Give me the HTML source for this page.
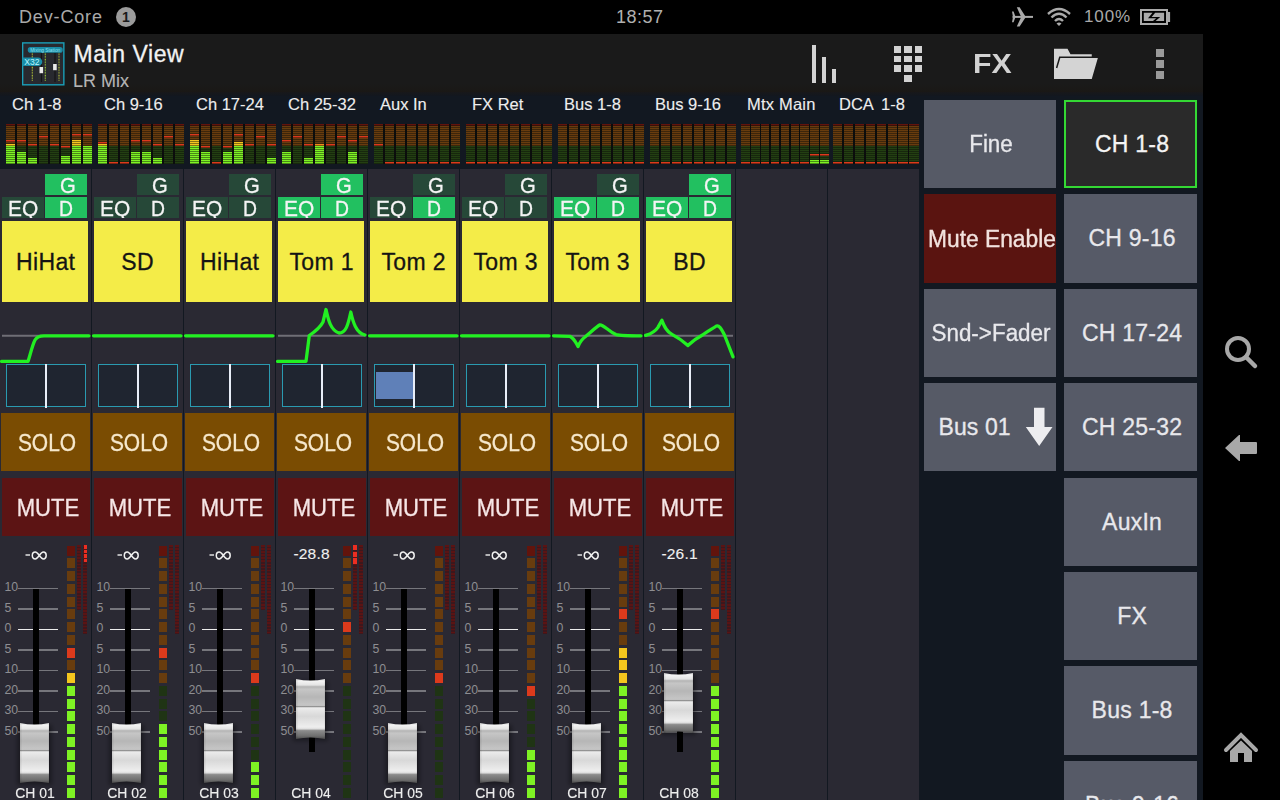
<!DOCTYPE html><html><head><meta charset="utf-8"><style>
html,body{margin:0;padding:0;width:1280px;height:800px;overflow:hidden;background:#000;font-family:"Liberation Sans", sans-serif;}
</style></head><body><div style="position:relative;width:1280px;height:800px;overflow:hidden;">
<div style="position:absolute;left:0px;top:0px;width:1280px;height:800px;background:#000;"></div><div style="position:absolute;left:0px;top:93px;width:1203px;height:707px;background:#121821;"></div><div style="position:absolute;left:0px;top:34px;width:1203px;height:58px;background:linear-gradient(#1a1a1a 0,#1a1a1a 50px,#1a1816 58px);"></div><div style="position:absolute;left:0px;top:92px;width:1203px;height:4px;background:linear-gradient(#18181a,#12171f);"></div><div style="position:absolute;left:19px;top:8px;font-size:18px;line-height:1;color:#a9a9a9;white-space:nowrap;letter-spacing:0.85px;-webkit-text-stroke:0.12px #a9a9a9;-webkit-text-stroke:0;">Dev-Core</div><div style="position:absolute;left:116px;top:7px;width:20px;height:20px;border-radius:50%;background:#9b9b9b;color:#1a1a1a;font-size:14px;font-weight:bold;line-height:20px;text-align:center;">1</div><div style="position:absolute;left:616px;top:8px;font-size:18px;line-height:1;color:#b0b0b0;white-space:nowrap;letter-spacing:0.5px;-webkit-text-stroke:0.12px #b0b0b0;-webkit-text-stroke:0;">18:57</div><div style="position:absolute;left:1084px;top:8px;font-size:17px;line-height:1;color:#a9a9a9;white-space:nowrap;letter-spacing:0.9px;-webkit-text-stroke:0.12px #a9a9a9;-webkit-text-stroke:0;">100%</div><svg style="position:absolute;left:1010px;top:6px" width="26" height="22" viewBox="0 0 26 22">
<path d="M2.5 9.9 L23 9.9 L23 11.9 L2.5 11.9Z" fill="#aaa"/>
<path d="M6.8 1.2 L9.6 1.2 L15.8 10.9 L9.6 20.6 L6.8 20.6 L11.2 10.9Z" fill="#aaa"/>
<path d="M2 5.5 L3.6 5.5 L5.2 10 L5.2 11.8 L3.6 16.3 L2 16.3 L3 10.9Z" fill="#aaa"/>
</svg><svg style="position:absolute;left:1046px;top:7px" width="26" height="20" viewBox="0 0 26 20">
<path d="M2 7 Q13 -3 24 7" stroke="#aaa" stroke-width="2.4" fill="none"/>
<path d="M5.5 10.5 Q13 3 20.5 10.5" stroke="#aaa" stroke-width="2.4" fill="none"/>
<path d="M9 14 Q13 10 17 14" stroke="#aaa" stroke-width="2.4" fill="none"/>
<path d="M10.5 16.5 L13 19 L15.5 16.5 Q13 14.5 10.5 16.5Z" fill="#aaa"/></svg><svg style="position:absolute;left:1140px;top:9px" width="31" height="17" viewBox="0 0 31 17">
<rect x="1" y="1" width="26" height="14" fill="none" stroke="#aaa" stroke-width="2"/>
<rect x="28" y="3" width="2.1" height="10" fill="#aaa"/>
<path d="M3.8 3.8 L24.1 3.8 L24.1 12 L3.8 12Z M12.5 3.8 L15.2 3.8 L11.6 7.9 L20.2 7.9 L15.6 12 L13 12 L16.2 9.2 L8 9.2 Z" fill="#aaa" fill-rule="evenodd"/>
</svg><svg style="position:absolute;left:22px;top:42px" width="43" height="44" viewBox="0 0 43 44">
<rect x="0.65" y="0.9" width="41.2" height="41.9" fill="#28292f" stroke="#1b9fb8" stroke-width="1.4"/>
<line x1="19.4" y1="11" x2="19.4" y2="40" stroke="#111" stroke-width="1"/>
<line x1="33" y1="11" x2="33" y2="40" stroke="#111" stroke-width="1"/>
<line x1="10.3" y1="10.6" x2="10.3" y2="39.6" stroke="#b8c83a" stroke-width="1.1" stroke-dasharray="0.9 0.7"/>
<line x1="23.3" y1="10.6" x2="23.3" y2="39.6" stroke="#9fd034" stroke-width="1.1" stroke-dasharray="0.9 0.7"/>
<line x1="37" y1="10.6" x2="37" y2="39.6" stroke="#b4c038" stroke-width="1.1" stroke-dasharray="0.9 0.7"/>
<rect x="5.75" y="5.1" width="35" height="5.6" rx="2.8" fill="#1a8ca6"/>
<text x="23.2" y="9.5" font-size="4.8" fill="#8fe0f0" font-family="Liberation Sans" text-anchor="middle">Mixing Station</text>
<path d="M0.5 15.5 L16 15.5 A4.25 4.25 0 0 1 16 24 L0.5 24Z" fill="#1a8ca6"/>
<text x="10" y="22.8" font-size="8.6" fill="#b8f4ff" font-family="Liberation Sans" text-anchor="middle">X32</text>
<rect x="17.5" y="25" width="3.6" height="6.2" fill="#e8e8e8"/>
<rect x="31.1" y="22" width="3.6" height="6.2" fill="#e8e8e8"/>
</svg><div style="position:absolute;left:73.6px;top:43px;font-size:23px;line-height:1;color:#f2f2f2;white-space:nowrap;letter-spacing:0.55px;-webkit-text-stroke:0.3px #f2f2f2;">Main View</div><div style="position:absolute;left:73px;top:72px;font-size:18px;line-height:1;color:#b5b5b5;white-space:nowrap;letter-spacing:0px;-webkit-text-stroke:0.12px #b5b5b5;">LR Mix</div><div style="position:absolute;left:812px;top:45px;width:4px;height:38px;background:#d2d2d2;"></div><div style="position:absolute;left:822px;top:57px;width:4px;height:26px;background:#d2d2d2;"></div><div style="position:absolute;left:832px;top:69px;width:4px;height:14px;background:#d2d2d2;"></div><div style="position:absolute;left:894.0px;top:45.8px;width:7.3px;height:6.8px;background:#d2d2d2;"></div><div style="position:absolute;left:904.3px;top:45.8px;width:7.3px;height:6.8px;background:#d2d2d2;"></div><div style="position:absolute;left:914.6px;top:45.8px;width:7.3px;height:6.8px;background:#d2d2d2;"></div><div style="position:absolute;left:894.0px;top:55.599999999999994px;width:7.3px;height:6.8px;background:#d2d2d2;"></div><div style="position:absolute;left:904.3px;top:55.599999999999994px;width:7.3px;height:6.8px;background:#d2d2d2;"></div><div style="position:absolute;left:914.6px;top:55.599999999999994px;width:7.3px;height:6.8px;background:#d2d2d2;"></div><div style="position:absolute;left:894.0px;top:65.4px;width:7.3px;height:6.8px;background:#d2d2d2;"></div><div style="position:absolute;left:904.3px;top:65.4px;width:7.3px;height:6.8px;background:#d2d2d2;"></div><div style="position:absolute;left:914.6px;top:65.4px;width:7.3px;height:6.8px;background:#d2d2d2;"></div><div style="position:absolute;left:904.3px;top:75.2px;width:7.3px;height:6.8px;background:#d2d2d2;"></div><div style="position:absolute;left:973px;top:50px;font-size:28px;line-height:1;color:#d2d2d2;white-space:nowrap;letter-spacing:0px;-webkit-text-stroke:0.3px #d2d2d2;transform:scaleX(1.08);transform-origin:0 0;font-weight:bold;-webkit-text-stroke:0;">FX</div><svg style="position:absolute;left:1053px;top:48px" width="48" height="34" viewBox="0 0 48 34">
<path d="M1 0.75 L14.5 0.75 L17.5 6.25 L38.75 6.25 L38.75 9.5 L45 9.5 L38.75 31 L1 31 Z" fill="#d4d4d4"/>
<path d="M3.6 20 L6.75 9.2 L46 9.2" fill="none" stroke="#1a1a1a" stroke-width="1.5"/></svg><div style="position:absolute;left:1156px;top:49px;width:8px;height:8px;background:#9a9a9a;"></div><div style="position:absolute;left:1156px;top:60px;width:8px;height:8px;background:#9a9a9a;"></div><div style="position:absolute;left:1156px;top:71px;width:8px;height:8px;background:#9a9a9a;"></div><svg style="position:absolute;left:1222px;top:333px" width="38" height="38" viewBox="0 0 38 38">
<circle cx="16" cy="16" r="11" fill="none" stroke="#a8a8a8" stroke-width="4"/>
<line x1="24" y1="24" x2="33" y2="33" stroke="#a8a8a8" stroke-width="4.5" stroke-linecap="round"/></svg><svg style="position:absolute;left:1222px;top:432px" width="38" height="32" viewBox="0 0 38 32">
<path d="M3 16 L17 3 L18 3 L18 10 L34 10 Q35 10 35 11 L35 21 Q35 22 34 22 L18 22 L18 29 L17 29 Z" fill="#a8a8a8"/></svg><svg style="position:absolute;left:1222px;top:730px" width="38" height="36" viewBox="0 0 38 36">
<path d="M4 20 L19 5 L34 20" fill="none" stroke="#a8a8a8" stroke-width="4" stroke-linecap="round" stroke-linejoin="miter"/>
<path d="M8 21 L19 10.5 L30 21 L30 32 L22 32 L22 23 L16 23 L16 32 L8 32 Z" fill="#a8a8a8"/></svg><div style="position:absolute;left:12px;top:95.6px;font-size:16.5px;line-height:1;color:#eeeeee;white-space:nowrap;letter-spacing:0px;-webkit-text-stroke:0.12px #eeeeee;">Ch 1-8</div><div style="position:absolute;left:104px;top:95.6px;font-size:16.5px;line-height:1;color:#eeeeee;white-space:nowrap;letter-spacing:0px;-webkit-text-stroke:0.12px #eeeeee;">Ch 9-16</div><div style="position:absolute;left:196px;top:95.6px;font-size:16.5px;line-height:1;color:#eeeeee;white-space:nowrap;letter-spacing:0px;-webkit-text-stroke:0.12px #eeeeee;">Ch 17-24</div><div style="position:absolute;left:288px;top:95.6px;font-size:16.5px;line-height:1;color:#eeeeee;white-space:nowrap;letter-spacing:0px;-webkit-text-stroke:0.12px #eeeeee;">Ch 25-32</div><div style="position:absolute;left:380px;top:95.6px;font-size:16.5px;line-height:1;color:#eeeeee;white-space:nowrap;letter-spacing:0px;-webkit-text-stroke:0.12px #eeeeee;">Aux In</div><div style="position:absolute;left:472px;top:95.6px;font-size:16.5px;line-height:1;color:#eeeeee;white-space:nowrap;letter-spacing:0px;-webkit-text-stroke:0.12px #eeeeee;">FX Ret</div><div style="position:absolute;left:564px;top:95.6px;font-size:16.5px;line-height:1;color:#eeeeee;white-space:nowrap;letter-spacing:0px;-webkit-text-stroke:0.12px #eeeeee;">Bus 1-8</div><div style="position:absolute;left:655px;top:95.6px;font-size:16.5px;line-height:1;color:#eeeeee;white-space:nowrap;letter-spacing:0px;-webkit-text-stroke:0.12px #eeeeee;">Bus 9-16</div><div style="position:absolute;left:747px;top:95.6px;font-size:16.5px;line-height:1;color:#eeeeee;white-space:nowrap;letter-spacing:0.2px;-webkit-text-stroke:0.12px #eeeeee;">Mtx Main</div><div style="position:absolute;left:839px;top:95.6px;font-size:16.5px;line-height:1;color:#eeeeee;white-space:nowrap;letter-spacing:0px;-webkit-text-stroke:0.12px #eeeeee;">DCA <span style="margin-left:3.5px">1-8</span></div><div style="position:absolute;left:6.10px;top:124px;width:85.84px;height:40px;background:#0b0d0c"></div><div style="position:absolute;left:6.10px;top:124px;width:9.4px;height:40px;background:repeating-linear-gradient(rgba(0,0,0,0) 0px,rgba(0,0,0,0) 1.45px,rgba(8,10,6,.45) 1.45px,rgba(8,10,6,.45) 2px),linear-gradient(#62140c 0px 2px,#683c0e 2px 4px,#683c0e 4px 6px,#683c0e 6px 8px,#683c0e 8px 10px,#683c0e 10px 12px,#683c0e 12px 14px,#683c0e 14px 16px,#dc3a1c 16px 18px,#683c0e 18px 20px,#f4c61e 20px 22px,#7ef224 22px 24px,#7ef224 24px 26px,#7ef224 26px 28px,#7ef224 28px 30px,#7ef224 30px 32px,#7ef224 32px 34px,#7ef224 34px 36px,#7ef224 36px 38px,#7ef224 38px 40px);"></div><div style="position:absolute;left:17.02px;top:124px;width:9.4px;height:40px;background:repeating-linear-gradient(rgba(0,0,0,0) 0px,rgba(0,0,0,0) 1.45px,rgba(8,10,6,.45) 1.45px,rgba(8,10,6,.45) 2px),linear-gradient(#62140c 0px 2px,#683c0e 2px 4px,#683c0e 4px 6px,#683c0e 6px 8px,#683c0e 8px 10px,#683c0e 10px 12px,#683c0e 12px 14px,#683c0e 14px 16px,#dc3a1c 16px 18px,#683c0e 18px 20px,#683c0e 20px 22px,#233f12 22px 24px,#233f12 24px 26px,#233f12 26px 28px,#7ef224 28px 30px,#7ef224 30px 32px,#7ef224 32px 34px,#7ef224 34px 36px,#7ef224 36px 38px,#7ef224 38px 40px);"></div><div style="position:absolute;left:27.94px;top:124px;width:9.4px;height:40px;background:repeating-linear-gradient(rgba(0,0,0,0) 0px,rgba(0,0,0,0) 1.45px,rgba(8,10,6,.45) 1.45px,rgba(8,10,6,.45) 2px),linear-gradient(#62140c 0px 2px,#683c0e 2px 4px,#683c0e 4px 6px,#683c0e 6px 8px,#683c0e 8px 10px,#683c0e 10px 12px,#683c0e 12px 14px,#683c0e 14px 16px,#683c0e 16px 18px,#683c0e 18px 20px,#dc3a1c 20px 22px,#233f12 22px 24px,#233f12 24px 26px,#233f12 26px 28px,#233f12 28px 30px,#233f12 30px 32px,#233f12 32px 34px,#7ef224 34px 36px,#7ef224 36px 38px,#7ef224 38px 40px);"></div><div style="position:absolute;left:38.86px;top:124px;width:9.4px;height:40px;background:repeating-linear-gradient(rgba(0,0,0,0) 0px,rgba(0,0,0,0) 1.45px,rgba(8,10,6,.45) 1.45px,rgba(8,10,6,.45) 2px),linear-gradient(#62140c 0px 2px,#683c0e 2px 4px,#683c0e 4px 6px,#683c0e 6px 8px,#683c0e 8px 10px,#683c0e 10px 12px,#dc3a1c 12px 14px,#683c0e 14px 16px,#683c0e 16px 18px,#683c0e 18px 20px,#683c0e 20px 22px,#233f12 22px 24px,#233f12 24px 26px,#233f12 26px 28px,#233f12 28px 30px,#233f12 30px 32px,#233f12 32px 34px,#233f12 34px 36px,#233f12 36px 38px,#233f12 38px 40px);"></div><div style="position:absolute;left:49.78px;top:124px;width:9.4px;height:40px;background:repeating-linear-gradient(rgba(0,0,0,0) 0px,rgba(0,0,0,0) 1.45px,rgba(8,10,6,.45) 1.45px,rgba(8,10,6,.45) 2px),linear-gradient(#62140c 0px 2px,#683c0e 2px 4px,#683c0e 4px 6px,#683c0e 6px 8px,#683c0e 8px 10px,#683c0e 10px 12px,#683c0e 12px 14px,#683c0e 14px 16px,#683c0e 16px 18px,#683c0e 18px 20px,#dc3a1c 20px 22px,#233f12 22px 24px,#233f12 24px 26px,#233f12 26px 28px,#233f12 28px 30px,#233f12 30px 32px,#233f12 32px 34px,#233f12 34px 36px,#233f12 36px 38px,#233f12 38px 40px);"></div><div style="position:absolute;left:60.70px;top:124px;width:9.4px;height:40px;background:repeating-linear-gradient(rgba(0,0,0,0) 0px,rgba(0,0,0,0) 1.45px,rgba(8,10,6,.45) 1.45px,rgba(8,10,6,.45) 2px),linear-gradient(#62140c 0px 2px,#683c0e 2px 4px,#683c0e 4px 6px,#683c0e 6px 8px,#683c0e 8px 10px,#683c0e 10px 12px,#683c0e 12px 14px,#683c0e 14px 16px,#683c0e 16px 18px,#683c0e 18px 20px,#683c0e 20px 22px,#dc3a1c 22px 24px,#233f12 24px 26px,#233f12 26px 28px,#233f12 28px 30px,#233f12 30px 32px,#7ef224 32px 34px,#7ef224 34px 36px,#7ef224 36px 38px,#7ef224 38px 40px);"></div><div style="position:absolute;left:71.62px;top:124px;width:9.4px;height:40px;background:repeating-linear-gradient(rgba(0,0,0,0) 0px,rgba(0,0,0,0) 1.45px,rgba(8,10,6,.45) 1.45px,rgba(8,10,6,.45) 2px),linear-gradient(#62140c 0px 2px,#683c0e 2px 4px,#683c0e 4px 6px,#683c0e 6px 8px,#683c0e 8px 10px,#dc3a1c 10px 12px,#683c0e 12px 14px,#683c0e 14px 16px,#f4c61e 16px 18px,#f4c61e 18px 20px,#f4c61e 20px 22px,#7ef224 22px 24px,#7ef224 24px 26px,#7ef224 26px 28px,#7ef224 28px 30px,#7ef224 30px 32px,#7ef224 32px 34px,#7ef224 34px 36px,#7ef224 36px 38px,#7ef224 38px 40px);"></div><div style="position:absolute;left:82.54px;top:124px;width:9.4px;height:40px;background:repeating-linear-gradient(rgba(0,0,0,0) 0px,rgba(0,0,0,0) 1.45px,rgba(8,10,6,.45) 1.45px,rgba(8,10,6,.45) 2px),linear-gradient(#62140c 0px 2px,#683c0e 2px 4px,#683c0e 4px 6px,#683c0e 6px 8px,#683c0e 8px 10px,#dc3a1c 10px 12px,#683c0e 12px 14px,#683c0e 14px 16px,#683c0e 16px 18px,#683c0e 18px 20px,#683c0e 20px 22px,#7ef224 22px 24px,#7ef224 24px 26px,#7ef224 26px 28px,#7ef224 28px 30px,#7ef224 30px 32px,#7ef224 32px 34px,#7ef224 34px 36px,#7ef224 36px 38px,#7ef224 38px 40px);"></div><div style="position:absolute;left:98.10px;top:124px;width:85.84px;height:40px;background:#0b0d0c"></div><div style="position:absolute;left:98.10px;top:124px;width:9.4px;height:40px;background:repeating-linear-gradient(rgba(0,0,0,0) 0px,rgba(0,0,0,0) 1.45px,rgba(8,10,6,.45) 1.45px,rgba(8,10,6,.45) 2px),linear-gradient(#62140c 0px 2px,#683c0e 2px 4px,#683c0e 4px 6px,#683c0e 6px 8px,#683c0e 8px 10px,#683c0e 10px 12px,#683c0e 12px 14px,#683c0e 14px 16px,#683c0e 16px 18px,#dc3a1c 18px 20px,#f4c61e 20px 22px,#7ef224 22px 24px,#7ef224 24px 26px,#7ef224 26px 28px,#7ef224 28px 30px,#7ef224 30px 32px,#7ef224 32px 34px,#7ef224 34px 36px,#7ef224 36px 38px,#7ef224 38px 40px);"></div><div style="position:absolute;left:109.02px;top:124px;width:9.4px;height:40px;background:repeating-linear-gradient(rgba(0,0,0,0) 0px,rgba(0,0,0,0) 1.45px,rgba(8,10,6,.45) 1.45px,rgba(8,10,6,.45) 2px),linear-gradient(#62140c 0px 2px,#683c0e 2px 4px,#683c0e 4px 6px,#683c0e 6px 8px,#683c0e 8px 10px,#683c0e 10px 12px,#683c0e 12px 14px,#683c0e 14px 16px,#683c0e 16px 18px,#683c0e 18px 20px,#683c0e 20px 22px,#233f12 22px 24px,#233f12 24px 26px,#233f12 26px 28px,#233f12 28px 30px,#233f12 30px 32px,#233f12 32px 34px,#233f12 34px 36px,#233f12 36px 38px,#dc3a1c 38px 40px);"></div><div style="position:absolute;left:119.94px;top:124px;width:9.4px;height:40px;background:repeating-linear-gradient(rgba(0,0,0,0) 0px,rgba(0,0,0,0) 1.45px,rgba(8,10,6,.45) 1.45px,rgba(8,10,6,.45) 2px),linear-gradient(#62140c 0px 2px,#683c0e 2px 4px,#683c0e 4px 6px,#683c0e 6px 8px,#683c0e 8px 10px,#683c0e 10px 12px,#683c0e 12px 14px,#683c0e 14px 16px,#683c0e 16px 18px,#683c0e 18px 20px,#683c0e 20px 22px,#233f12 22px 24px,#233f12 24px 26px,#233f12 26px 28px,#233f12 28px 30px,#233f12 30px 32px,#233f12 32px 34px,#233f12 34px 36px,#233f12 36px 38px,#dc3a1c 38px 40px);"></div><div style="position:absolute;left:130.86px;top:124px;width:9.4px;height:40px;background:repeating-linear-gradient(rgba(0,0,0,0) 0px,rgba(0,0,0,0) 1.45px,rgba(8,10,6,.45) 1.45px,rgba(8,10,6,.45) 2px),linear-gradient(#62140c 0px 2px,#683c0e 2px 4px,#683c0e 4px 6px,#683c0e 6px 8px,#683c0e 8px 10px,#683c0e 10px 12px,#683c0e 12px 14px,#683c0e 14px 16px,#dc3a1c 16px 18px,#683c0e 18px 20px,#683c0e 20px 22px,#233f12 22px 24px,#233f12 24px 26px,#233f12 26px 28px,#7ef224 28px 30px,#7ef224 30px 32px,#7ef224 32px 34px,#7ef224 34px 36px,#7ef224 36px 38px,#7ef224 38px 40px);"></div><div style="position:absolute;left:141.78px;top:124px;width:9.4px;height:40px;background:repeating-linear-gradient(rgba(0,0,0,0) 0px,rgba(0,0,0,0) 1.45px,rgba(8,10,6,.45) 1.45px,rgba(8,10,6,.45) 2px),linear-gradient(#62140c 0px 2px,#683c0e 2px 4px,#683c0e 4px 6px,#683c0e 6px 8px,#683c0e 8px 10px,#683c0e 10px 12px,#683c0e 12px 14px,#683c0e 14px 16px,#dc3a1c 16px 18px,#683c0e 18px 20px,#683c0e 20px 22px,#233f12 22px 24px,#233f12 24px 26px,#233f12 26px 28px,#7ef224 28px 30px,#7ef224 30px 32px,#7ef224 32px 34px,#7ef224 34px 36px,#7ef224 36px 38px,#7ef224 38px 40px);"></div><div style="position:absolute;left:152.70px;top:124px;width:9.4px;height:40px;background:repeating-linear-gradient(rgba(0,0,0,0) 0px,rgba(0,0,0,0) 1.45px,rgba(8,10,6,.45) 1.45px,rgba(8,10,6,.45) 2px),linear-gradient(#62140c 0px 2px,#683c0e 2px 4px,#683c0e 4px 6px,#683c0e 6px 8px,#683c0e 8px 10px,#683c0e 10px 12px,#683c0e 12px 14px,#683c0e 14px 16px,#683c0e 16px 18px,#683c0e 18px 20px,#dc3a1c 20px 22px,#233f12 22px 24px,#233f12 24px 26px,#233f12 26px 28px,#233f12 28px 30px,#233f12 30px 32px,#233f12 32px 34px,#7ef224 34px 36px,#7ef224 36px 38px,#7ef224 38px 40px);"></div><div style="position:absolute;left:163.62px;top:124px;width:9.4px;height:40px;background:repeating-linear-gradient(rgba(0,0,0,0) 0px,rgba(0,0,0,0) 1.45px,rgba(8,10,6,.45) 1.45px,rgba(8,10,6,.45) 2px),linear-gradient(#62140c 0px 2px,#683c0e 2px 4px,#683c0e 4px 6px,#683c0e 6px 8px,#683c0e 8px 10px,#683c0e 10px 12px,#dc3a1c 12px 14px,#683c0e 14px 16px,#683c0e 16px 18px,#683c0e 18px 20px,#683c0e 20px 22px,#233f12 22px 24px,#233f12 24px 26px,#233f12 26px 28px,#233f12 28px 30px,#233f12 30px 32px,#233f12 32px 34px,#233f12 34px 36px,#233f12 36px 38px,#233f12 38px 40px);"></div><div style="position:absolute;left:174.54px;top:124px;width:9.4px;height:40px;background:repeating-linear-gradient(rgba(0,0,0,0) 0px,rgba(0,0,0,0) 1.45px,rgba(8,10,6,.45) 1.45px,rgba(8,10,6,.45) 2px),linear-gradient(#62140c 0px 2px,#683c0e 2px 4px,#683c0e 4px 6px,#683c0e 6px 8px,#683c0e 8px 10px,#683c0e 10px 12px,#683c0e 12px 14px,#683c0e 14px 16px,#683c0e 16px 18px,#683c0e 18px 20px,#dc3a1c 20px 22px,#233f12 22px 24px,#233f12 24px 26px,#233f12 26px 28px,#233f12 28px 30px,#233f12 30px 32px,#233f12 32px 34px,#233f12 34px 36px,#233f12 36px 38px,#233f12 38px 40px);"></div><div style="position:absolute;left:190.10px;top:124px;width:85.84px;height:40px;background:#0b0d0c"></div><div style="position:absolute;left:190.10px;top:124px;width:9.4px;height:40px;background:repeating-linear-gradient(rgba(0,0,0,0) 0px,rgba(0,0,0,0) 1.45px,rgba(8,10,6,.45) 1.45px,rgba(8,10,6,.45) 2px),linear-gradient(#62140c 0px 2px,#683c0e 2px 4px,#683c0e 4px 6px,#683c0e 6px 8px,#683c0e 8px 10px,#dc3a1c 10px 12px,#683c0e 12px 14px,#683c0e 14px 16px,#f4c61e 16px 18px,#f4c61e 18px 20px,#f4c61e 20px 22px,#7ef224 22px 24px,#7ef224 24px 26px,#7ef224 26px 28px,#7ef224 28px 30px,#7ef224 30px 32px,#7ef224 32px 34px,#7ef224 34px 36px,#7ef224 36px 38px,#7ef224 38px 40px);"></div><div style="position:absolute;left:201.02px;top:124px;width:9.4px;height:40px;background:repeating-linear-gradient(rgba(0,0,0,0) 0px,rgba(0,0,0,0) 1.45px,rgba(8,10,6,.45) 1.45px,rgba(8,10,6,.45) 2px),linear-gradient(#62140c 0px 2px,#683c0e 2px 4px,#683c0e 4px 6px,#683c0e 6px 8px,#683c0e 8px 10px,#683c0e 10px 12px,#683c0e 12px 14px,#683c0e 14px 16px,#683c0e 16px 18px,#683c0e 18px 20px,#683c0e 20px 22px,#dc3a1c 22px 24px,#233f12 24px 26px,#233f12 26px 28px,#7ef224 28px 30px,#7ef224 30px 32px,#7ef224 32px 34px,#7ef224 34px 36px,#7ef224 36px 38px,#7ef224 38px 40px);"></div><div style="position:absolute;left:211.94px;top:124px;width:9.4px;height:40px;background:repeating-linear-gradient(rgba(0,0,0,0) 0px,rgba(0,0,0,0) 1.45px,rgba(8,10,6,.45) 1.45px,rgba(8,10,6,.45) 2px),linear-gradient(#62140c 0px 2px,#683c0e 2px 4px,#683c0e 4px 6px,#683c0e 6px 8px,#683c0e 8px 10px,#683c0e 10px 12px,#683c0e 12px 14px,#683c0e 14px 16px,#683c0e 16px 18px,#683c0e 18px 20px,#683c0e 20px 22px,#233f12 22px 24px,#233f12 24px 26px,#233f12 26px 28px,#233f12 28px 30px,#233f12 30px 32px,#233f12 32px 34px,#233f12 34px 36px,#233f12 36px 38px,#dc3a1c 38px 40px);"></div><div style="position:absolute;left:222.86px;top:124px;width:9.4px;height:40px;background:repeating-linear-gradient(rgba(0,0,0,0) 0px,rgba(0,0,0,0) 1.45px,rgba(8,10,6,.45) 1.45px,rgba(8,10,6,.45) 2px),linear-gradient(#62140c 0px 2px,#683c0e 2px 4px,#683c0e 4px 6px,#683c0e 6px 8px,#683c0e 8px 10px,#683c0e 10px 12px,#683c0e 12px 14px,#683c0e 14px 16px,#683c0e 16px 18px,#683c0e 18px 20px,#683c0e 20px 22px,#dc3a1c 22px 24px,#233f12 24px 26px,#233f12 26px 28px,#7ef224 28px 30px,#7ef224 30px 32px,#7ef224 32px 34px,#7ef224 34px 36px,#7ef224 36px 38px,#7ef224 38px 40px);"></div><div style="position:absolute;left:233.78px;top:124px;width:9.4px;height:40px;background:repeating-linear-gradient(rgba(0,0,0,0) 0px,rgba(0,0,0,0) 1.45px,rgba(8,10,6,.45) 1.45px,rgba(8,10,6,.45) 2px),linear-gradient(#62140c 0px 2px,#683c0e 2px 4px,#683c0e 4px 6px,#683c0e 6px 8px,#683c0e 8px 10px,#dc3a1c 10px 12px,#683c0e 12px 14px,#683c0e 14px 16px,#683c0e 16px 18px,#f4c61e 18px 20px,#f4c61e 20px 22px,#7ef224 22px 24px,#7ef224 24px 26px,#7ef224 26px 28px,#7ef224 28px 30px,#7ef224 30px 32px,#7ef224 32px 34px,#7ef224 34px 36px,#7ef224 36px 38px,#7ef224 38px 40px);"></div><div style="position:absolute;left:244.70px;top:124px;width:9.4px;height:40px;background:repeating-linear-gradient(rgba(0,0,0,0) 0px,rgba(0,0,0,0) 1.45px,rgba(8,10,6,.45) 1.45px,rgba(8,10,6,.45) 2px),linear-gradient(#62140c 0px 2px,#683c0e 2px 4px,#683c0e 4px 6px,#683c0e 6px 8px,#683c0e 8px 10px,#683c0e 10px 12px,#683c0e 12px 14px,#683c0e 14px 16px,#683c0e 16px 18px,#683c0e 18px 20px,#dc3a1c 20px 22px,#233f12 22px 24px,#233f12 24px 26px,#233f12 26px 28px,#233f12 28px 30px,#233f12 30px 32px,#233f12 32px 34px,#233f12 34px 36px,#233f12 36px 38px,#233f12 38px 40px);"></div><div style="position:absolute;left:255.62px;top:124px;width:9.4px;height:40px;background:repeating-linear-gradient(rgba(0,0,0,0) 0px,rgba(0,0,0,0) 1.45px,rgba(8,10,6,.45) 1.45px,rgba(8,10,6,.45) 2px),linear-gradient(#62140c 0px 2px,#683c0e 2px 4px,#683c0e 4px 6px,#683c0e 6px 8px,#683c0e 8px 10px,#683c0e 10px 12px,#dc3a1c 12px 14px,#683c0e 14px 16px,#683c0e 16px 18px,#683c0e 18px 20px,#683c0e 20px 22px,#233f12 22px 24px,#233f12 24px 26px,#233f12 26px 28px,#233f12 28px 30px,#233f12 30px 32px,#233f12 32px 34px,#233f12 34px 36px,#233f12 36px 38px,#233f12 38px 40px);"></div><div style="position:absolute;left:266.54px;top:124px;width:9.4px;height:40px;background:repeating-linear-gradient(rgba(0,0,0,0) 0px,rgba(0,0,0,0) 1.45px,rgba(8,10,6,.45) 1.45px,rgba(8,10,6,.45) 2px),linear-gradient(#62140c 0px 2px,#683c0e 2px 4px,#683c0e 4px 6px,#683c0e 6px 8px,#683c0e 8px 10px,#683c0e 10px 12px,#683c0e 12px 14px,#683c0e 14px 16px,#683c0e 16px 18px,#683c0e 18px 20px,#dc3a1c 20px 22px,#233f12 22px 24px,#233f12 24px 26px,#233f12 26px 28px,#233f12 28px 30px,#233f12 30px 32px,#233f12 32px 34px,#7ef224 34px 36px,#7ef224 36px 38px,#7ef224 38px 40px);"></div><div style="position:absolute;left:282.10px;top:124px;width:85.84px;height:40px;background:#0b0d0c"></div><div style="position:absolute;left:282.10px;top:124px;width:9.4px;height:40px;background:repeating-linear-gradient(rgba(0,0,0,0) 0px,rgba(0,0,0,0) 1.45px,rgba(8,10,6,.45) 1.45px,rgba(8,10,6,.45) 2px),linear-gradient(#62140c 0px 2px,#683c0e 2px 4px,#683c0e 4px 6px,#683c0e 6px 8px,#683c0e 8px 10px,#683c0e 10px 12px,#683c0e 12px 14px,#683c0e 14px 16px,#dc3a1c 16px 18px,#683c0e 18px 20px,#683c0e 20px 22px,#233f12 22px 24px,#233f12 24px 26px,#233f12 26px 28px,#7ef224 28px 30px,#7ef224 30px 32px,#7ef224 32px 34px,#7ef224 34px 36px,#7ef224 36px 38px,#7ef224 38px 40px);"></div><div style="position:absolute;left:293.02px;top:124px;width:9.4px;height:40px;background:repeating-linear-gradient(rgba(0,0,0,0) 0px,rgba(0,0,0,0) 1.45px,rgba(8,10,6,.45) 1.45px,rgba(8,10,6,.45) 2px),linear-gradient(#62140c 0px 2px,#683c0e 2px 4px,#683c0e 4px 6px,#683c0e 6px 8px,#683c0e 8px 10px,#683c0e 10px 12px,#dc3a1c 12px 14px,#683c0e 14px 16px,#683c0e 16px 18px,#683c0e 18px 20px,#683c0e 20px 22px,#233f12 22px 24px,#233f12 24px 26px,#233f12 26px 28px,#233f12 28px 30px,#233f12 30px 32px,#233f12 32px 34px,#233f12 34px 36px,#233f12 36px 38px,#233f12 38px 40px);"></div><div style="position:absolute;left:303.94px;top:124px;width:9.4px;height:40px;background:repeating-linear-gradient(rgba(0,0,0,0) 0px,rgba(0,0,0,0) 1.45px,rgba(8,10,6,.45) 1.45px,rgba(8,10,6,.45) 2px),linear-gradient(#62140c 0px 2px,#683c0e 2px 4px,#683c0e 4px 6px,#683c0e 6px 8px,#683c0e 8px 10px,#683c0e 10px 12px,#683c0e 12px 14px,#683c0e 14px 16px,#683c0e 16px 18px,#683c0e 18px 20px,#dc3a1c 20px 22px,#233f12 22px 24px,#233f12 24px 26px,#233f12 26px 28px,#233f12 28px 30px,#233f12 30px 32px,#233f12 32px 34px,#7ef224 34px 36px,#7ef224 36px 38px,#7ef224 38px 40px);"></div><div style="position:absolute;left:314.86px;top:124px;width:9.4px;height:40px;background:repeating-linear-gradient(rgba(0,0,0,0) 0px,rgba(0,0,0,0) 1.45px,rgba(8,10,6,.45) 1.45px,rgba(8,10,6,.45) 2px),linear-gradient(#62140c 0px 2px,#683c0e 2px 4px,#683c0e 4px 6px,#683c0e 6px 8px,#683c0e 8px 10px,#683c0e 10px 12px,#683c0e 12px 14px,#683c0e 14px 16px,#683c0e 16px 18px,#683c0e 18px 20px,#f08a1a 20px 22px,#7ef224 22px 24px,#7ef224 24px 26px,#7ef224 26px 28px,#7ef224 28px 30px,#7ef224 30px 32px,#7ef224 32px 34px,#7ef224 34px 36px,#7ef224 36px 38px,#7ef224 38px 40px);"></div><div style="position:absolute;left:325.78px;top:124px;width:9.4px;height:40px;background:repeating-linear-gradient(rgba(0,0,0,0) 0px,rgba(0,0,0,0) 1.45px,rgba(8,10,6,.45) 1.45px,rgba(8,10,6,.45) 2px),linear-gradient(#62140c 0px 2px,#683c0e 2px 4px,#683c0e 4px 6px,#683c0e 6px 8px,#683c0e 8px 10px,#683c0e 10px 12px,#683c0e 12px 14px,#683c0e 14px 16px,#683c0e 16px 18px,#683c0e 18px 20px,#dc3a1c 20px 22px,#233f12 22px 24px,#233f12 24px 26px,#233f12 26px 28px,#233f12 28px 30px,#233f12 30px 32px,#233f12 32px 34px,#233f12 34px 36px,#233f12 36px 38px,#233f12 38px 40px);"></div><div style="position:absolute;left:336.70px;top:124px;width:9.4px;height:40px;background:repeating-linear-gradient(rgba(0,0,0,0) 0px,rgba(0,0,0,0) 1.45px,rgba(8,10,6,.45) 1.45px,rgba(8,10,6,.45) 2px),linear-gradient(#62140c 0px 2px,#683c0e 2px 4px,#683c0e 4px 6px,#683c0e 6px 8px,#683c0e 8px 10px,#683c0e 10px 12px,#dc3a1c 12px 14px,#683c0e 14px 16px,#683c0e 16px 18px,#683c0e 18px 20px,#683c0e 20px 22px,#233f12 22px 24px,#233f12 24px 26px,#233f12 26px 28px,#233f12 28px 30px,#233f12 30px 32px,#233f12 32px 34px,#233f12 34px 36px,#233f12 36px 38px,#233f12 38px 40px);"></div><div style="position:absolute;left:347.62px;top:124px;width:9.4px;height:40px;background:repeating-linear-gradient(rgba(0,0,0,0) 0px,rgba(0,0,0,0) 1.45px,rgba(8,10,6,.45) 1.45px,rgba(8,10,6,.45) 2px),linear-gradient(#62140c 0px 2px,#683c0e 2px 4px,#683c0e 4px 6px,#683c0e 6px 8px,#683c0e 8px 10px,#683c0e 10px 12px,#683c0e 12px 14px,#683c0e 14px 16px,#dc3a1c 16px 18px,#683c0e 18px 20px,#683c0e 20px 22px,#233f12 22px 24px,#233f12 24px 26px,#233f12 26px 28px,#7ef224 28px 30px,#7ef224 30px 32px,#7ef224 32px 34px,#7ef224 34px 36px,#7ef224 36px 38px,#7ef224 38px 40px);"></div><div style="position:absolute;left:358.54px;top:124px;width:9.4px;height:40px;background:repeating-linear-gradient(rgba(0,0,0,0) 0px,rgba(0,0,0,0) 1.45px,rgba(8,10,6,.45) 1.45px,rgba(8,10,6,.45) 2px),linear-gradient(#62140c 0px 2px,#683c0e 2px 4px,#683c0e 4px 6px,#683c0e 6px 8px,#683c0e 8px 10px,#683c0e 10px 12px,#dc3a1c 12px 14px,#683c0e 14px 16px,#683c0e 16px 18px,#683c0e 18px 20px,#683c0e 20px 22px,#233f12 22px 24px,#233f12 24px 26px,#233f12 26px 28px,#233f12 28px 30px,#233f12 30px 32px,#233f12 32px 34px,#233f12 34px 36px,#233f12 36px 38px,#233f12 38px 40px);"></div><div style="position:absolute;left:374.10px;top:124px;width:85.84px;height:40px;background:#0b0d0c"></div><div style="position:absolute;left:374.10px;top:124px;width:9.4px;height:40px;background:repeating-linear-gradient(rgba(0,0,0,0) 0px,rgba(0,0,0,0) 1.45px,rgba(8,10,6,.45) 1.45px,rgba(8,10,6,.45) 2px),linear-gradient(#62140c 0px 2px,#683c0e 2px 4px,#683c0e 4px 6px,#683c0e 6px 8px,#683c0e 8px 10px,#683c0e 10px 12px,#683c0e 12px 14px,#683c0e 14px 16px,#683c0e 16px 18px,#683c0e 18px 20px,#dc3a1c 20px 22px,#233f12 22px 24px,#233f12 24px 26px,#233f12 26px 28px,#233f12 28px 30px,#233f12 30px 32px,#233f12 32px 34px,#233f12 34px 36px,#233f12 36px 38px,#233f12 38px 40px);"></div><div style="position:absolute;left:385.02px;top:124px;width:9.4px;height:40px;background:repeating-linear-gradient(rgba(0,0,0,0) 0px,rgba(0,0,0,0) 1.45px,rgba(8,10,6,.45) 1.45px,rgba(8,10,6,.45) 2px),linear-gradient(#62140c 0px 2px,#683c0e 2px 4px,#683c0e 4px 6px,#683c0e 6px 8px,#683c0e 8px 10px,#683c0e 10px 12px,#683c0e 12px 14px,#683c0e 14px 16px,#683c0e 16px 18px,#683c0e 18px 20px,#683c0e 20px 22px,#233f12 22px 24px,#233f12 24px 26px,#233f12 26px 28px,#233f12 28px 30px,#233f12 30px 32px,#233f12 32px 34px,#233f12 34px 36px,#233f12 36px 38px,#dc3a1c 38px 40px);"></div><div style="position:absolute;left:395.94px;top:124px;width:9.4px;height:40px;background:repeating-linear-gradient(rgba(0,0,0,0) 0px,rgba(0,0,0,0) 1.45px,rgba(8,10,6,.45) 1.45px,rgba(8,10,6,.45) 2px),linear-gradient(#62140c 0px 2px,#683c0e 2px 4px,#683c0e 4px 6px,#683c0e 6px 8px,#683c0e 8px 10px,#683c0e 10px 12px,#683c0e 12px 14px,#683c0e 14px 16px,#683c0e 16px 18px,#683c0e 18px 20px,#683c0e 20px 22px,#233f12 22px 24px,#233f12 24px 26px,#233f12 26px 28px,#233f12 28px 30px,#233f12 30px 32px,#233f12 32px 34px,#233f12 34px 36px,#233f12 36px 38px,#dc3a1c 38px 40px);"></div><div style="position:absolute;left:406.86px;top:124px;width:9.4px;height:40px;background:repeating-linear-gradient(rgba(0,0,0,0) 0px,rgba(0,0,0,0) 1.45px,rgba(8,10,6,.45) 1.45px,rgba(8,10,6,.45) 2px),linear-gradient(#62140c 0px 2px,#683c0e 2px 4px,#683c0e 4px 6px,#683c0e 6px 8px,#683c0e 8px 10px,#683c0e 10px 12px,#683c0e 12px 14px,#683c0e 14px 16px,#683c0e 16px 18px,#683c0e 18px 20px,#683c0e 20px 22px,#233f12 22px 24px,#233f12 24px 26px,#233f12 26px 28px,#233f12 28px 30px,#233f12 30px 32px,#233f12 32px 34px,#233f12 34px 36px,#233f12 36px 38px,#dc3a1c 38px 40px);"></div><div style="position:absolute;left:417.78px;top:124px;width:9.4px;height:40px;background:repeating-linear-gradient(rgba(0,0,0,0) 0px,rgba(0,0,0,0) 1.45px,rgba(8,10,6,.45) 1.45px,rgba(8,10,6,.45) 2px),linear-gradient(#62140c 0px 2px,#683c0e 2px 4px,#683c0e 4px 6px,#683c0e 6px 8px,#683c0e 8px 10px,#683c0e 10px 12px,#683c0e 12px 14px,#683c0e 14px 16px,#683c0e 16px 18px,#683c0e 18px 20px,#683c0e 20px 22px,#233f12 22px 24px,#233f12 24px 26px,#233f12 26px 28px,#233f12 28px 30px,#233f12 30px 32px,#233f12 32px 34px,#233f12 34px 36px,#233f12 36px 38px,#dc3a1c 38px 40px);"></div><div style="position:absolute;left:428.70px;top:124px;width:9.4px;height:40px;background:repeating-linear-gradient(rgba(0,0,0,0) 0px,rgba(0,0,0,0) 1.45px,rgba(8,10,6,.45) 1.45px,rgba(8,10,6,.45) 2px),linear-gradient(#62140c 0px 2px,#683c0e 2px 4px,#683c0e 4px 6px,#683c0e 6px 8px,#683c0e 8px 10px,#683c0e 10px 12px,#683c0e 12px 14px,#683c0e 14px 16px,#683c0e 16px 18px,#683c0e 18px 20px,#683c0e 20px 22px,#233f12 22px 24px,#233f12 24px 26px,#233f12 26px 28px,#233f12 28px 30px,#233f12 30px 32px,#233f12 32px 34px,#233f12 34px 36px,#233f12 36px 38px,#dc3a1c 38px 40px);"></div><div style="position:absolute;left:439.62px;top:124px;width:9.4px;height:40px;background:repeating-linear-gradient(rgba(0,0,0,0) 0px,rgba(0,0,0,0) 1.45px,rgba(8,10,6,.45) 1.45px,rgba(8,10,6,.45) 2px),linear-gradient(#62140c 0px 2px,#683c0e 2px 4px,#683c0e 4px 6px,#683c0e 6px 8px,#683c0e 8px 10px,#683c0e 10px 12px,#683c0e 12px 14px,#683c0e 14px 16px,#683c0e 16px 18px,#683c0e 18px 20px,#683c0e 20px 22px,#233f12 22px 24px,#233f12 24px 26px,#233f12 26px 28px,#233f12 28px 30px,#233f12 30px 32px,#233f12 32px 34px,#233f12 34px 36px,#233f12 36px 38px,#dc3a1c 38px 40px);"></div><div style="position:absolute;left:450.54px;top:124px;width:9.4px;height:40px;background:repeating-linear-gradient(rgba(0,0,0,0) 0px,rgba(0,0,0,0) 1.45px,rgba(8,10,6,.45) 1.45px,rgba(8,10,6,.45) 2px),linear-gradient(#62140c 0px 2px,#683c0e 2px 4px,#683c0e 4px 6px,#683c0e 6px 8px,#683c0e 8px 10px,#683c0e 10px 12px,#683c0e 12px 14px,#683c0e 14px 16px,#683c0e 16px 18px,#683c0e 18px 20px,#683c0e 20px 22px,#233f12 22px 24px,#233f12 24px 26px,#233f12 26px 28px,#233f12 28px 30px,#233f12 30px 32px,#233f12 32px 34px,#233f12 34px 36px,#233f12 36px 38px,#dc3a1c 38px 40px);"></div><div style="position:absolute;left:466.10px;top:124px;width:85.84px;height:40px;background:#0b0d0c"></div><div style="position:absolute;left:466.10px;top:124px;width:9.4px;height:40px;background:repeating-linear-gradient(rgba(0,0,0,0) 0px,rgba(0,0,0,0) 1.45px,rgba(8,10,6,.45) 1.45px,rgba(8,10,6,.45) 2px),linear-gradient(#62140c 0px 2px,#683c0e 2px 4px,#683c0e 4px 6px,#683c0e 6px 8px,#683c0e 8px 10px,#683c0e 10px 12px,#683c0e 12px 14px,#683c0e 14px 16px,#683c0e 16px 18px,#683c0e 18px 20px,#683c0e 20px 22px,#233f12 22px 24px,#233f12 24px 26px,#233f12 26px 28px,#233f12 28px 30px,#233f12 30px 32px,#233f12 32px 34px,#233f12 34px 36px,#233f12 36px 38px,#dc3a1c 38px 40px);"></div><div style="position:absolute;left:477.02px;top:124px;width:9.4px;height:40px;background:repeating-linear-gradient(rgba(0,0,0,0) 0px,rgba(0,0,0,0) 1.45px,rgba(8,10,6,.45) 1.45px,rgba(8,10,6,.45) 2px),linear-gradient(#62140c 0px 2px,#683c0e 2px 4px,#683c0e 4px 6px,#683c0e 6px 8px,#683c0e 8px 10px,#683c0e 10px 12px,#683c0e 12px 14px,#683c0e 14px 16px,#683c0e 16px 18px,#683c0e 18px 20px,#683c0e 20px 22px,#233f12 22px 24px,#233f12 24px 26px,#233f12 26px 28px,#233f12 28px 30px,#233f12 30px 32px,#233f12 32px 34px,#233f12 34px 36px,#233f12 36px 38px,#dc3a1c 38px 40px);"></div><div style="position:absolute;left:487.94px;top:124px;width:9.4px;height:40px;background:repeating-linear-gradient(rgba(0,0,0,0) 0px,rgba(0,0,0,0) 1.45px,rgba(8,10,6,.45) 1.45px,rgba(8,10,6,.45) 2px),linear-gradient(#62140c 0px 2px,#683c0e 2px 4px,#683c0e 4px 6px,#683c0e 6px 8px,#683c0e 8px 10px,#683c0e 10px 12px,#683c0e 12px 14px,#683c0e 14px 16px,#683c0e 16px 18px,#683c0e 18px 20px,#683c0e 20px 22px,#233f12 22px 24px,#233f12 24px 26px,#233f12 26px 28px,#233f12 28px 30px,#233f12 30px 32px,#233f12 32px 34px,#233f12 34px 36px,#233f12 36px 38px,#dc3a1c 38px 40px);"></div><div style="position:absolute;left:498.86px;top:124px;width:9.4px;height:40px;background:repeating-linear-gradient(rgba(0,0,0,0) 0px,rgba(0,0,0,0) 1.45px,rgba(8,10,6,.45) 1.45px,rgba(8,10,6,.45) 2px),linear-gradient(#62140c 0px 2px,#683c0e 2px 4px,#683c0e 4px 6px,#683c0e 6px 8px,#683c0e 8px 10px,#683c0e 10px 12px,#683c0e 12px 14px,#683c0e 14px 16px,#683c0e 16px 18px,#683c0e 18px 20px,#683c0e 20px 22px,#233f12 22px 24px,#233f12 24px 26px,#233f12 26px 28px,#233f12 28px 30px,#233f12 30px 32px,#233f12 32px 34px,#233f12 34px 36px,#233f12 36px 38px,#dc3a1c 38px 40px);"></div><div style="position:absolute;left:509.78px;top:124px;width:9.4px;height:40px;background:repeating-linear-gradient(rgba(0,0,0,0) 0px,rgba(0,0,0,0) 1.45px,rgba(8,10,6,.45) 1.45px,rgba(8,10,6,.45) 2px),linear-gradient(#62140c 0px 2px,#683c0e 2px 4px,#683c0e 4px 6px,#683c0e 6px 8px,#683c0e 8px 10px,#683c0e 10px 12px,#683c0e 12px 14px,#683c0e 14px 16px,#683c0e 16px 18px,#683c0e 18px 20px,#683c0e 20px 22px,#233f12 22px 24px,#233f12 24px 26px,#233f12 26px 28px,#233f12 28px 30px,#233f12 30px 32px,#233f12 32px 34px,#233f12 34px 36px,#233f12 36px 38px,#dc3a1c 38px 40px);"></div><div style="position:absolute;left:520.70px;top:124px;width:9.4px;height:40px;background:repeating-linear-gradient(rgba(0,0,0,0) 0px,rgba(0,0,0,0) 1.45px,rgba(8,10,6,.45) 1.45px,rgba(8,10,6,.45) 2px),linear-gradient(#62140c 0px 2px,#683c0e 2px 4px,#683c0e 4px 6px,#683c0e 6px 8px,#683c0e 8px 10px,#683c0e 10px 12px,#683c0e 12px 14px,#683c0e 14px 16px,#683c0e 16px 18px,#683c0e 18px 20px,#683c0e 20px 22px,#233f12 22px 24px,#233f12 24px 26px,#233f12 26px 28px,#233f12 28px 30px,#233f12 30px 32px,#233f12 32px 34px,#233f12 34px 36px,#233f12 36px 38px,#dc3a1c 38px 40px);"></div><div style="position:absolute;left:531.62px;top:124px;width:9.4px;height:40px;background:repeating-linear-gradient(rgba(0,0,0,0) 0px,rgba(0,0,0,0) 1.45px,rgba(8,10,6,.45) 1.45px,rgba(8,10,6,.45) 2px),linear-gradient(#62140c 0px 2px,#683c0e 2px 4px,#683c0e 4px 6px,#683c0e 6px 8px,#683c0e 8px 10px,#683c0e 10px 12px,#683c0e 12px 14px,#683c0e 14px 16px,#683c0e 16px 18px,#683c0e 18px 20px,#683c0e 20px 22px,#233f12 22px 24px,#233f12 24px 26px,#233f12 26px 28px,#233f12 28px 30px,#233f12 30px 32px,#233f12 32px 34px,#233f12 34px 36px,#233f12 36px 38px,#dc3a1c 38px 40px);"></div><div style="position:absolute;left:542.54px;top:124px;width:9.4px;height:40px;background:repeating-linear-gradient(rgba(0,0,0,0) 0px,rgba(0,0,0,0) 1.45px,rgba(8,10,6,.45) 1.45px,rgba(8,10,6,.45) 2px),linear-gradient(#62140c 0px 2px,#683c0e 2px 4px,#683c0e 4px 6px,#683c0e 6px 8px,#683c0e 8px 10px,#683c0e 10px 12px,#683c0e 12px 14px,#683c0e 14px 16px,#683c0e 16px 18px,#683c0e 18px 20px,#683c0e 20px 22px,#233f12 22px 24px,#233f12 24px 26px,#233f12 26px 28px,#233f12 28px 30px,#233f12 30px 32px,#233f12 32px 34px,#233f12 34px 36px,#233f12 36px 38px,#dc3a1c 38px 40px);"></div><div style="position:absolute;left:558.10px;top:124px;width:85.84px;height:40px;background:#0b0d0c"></div><div style="position:absolute;left:558.10px;top:124px;width:9.4px;height:40px;background:repeating-linear-gradient(rgba(0,0,0,0) 0px,rgba(0,0,0,0) 1.45px,rgba(8,10,6,.45) 1.45px,rgba(8,10,6,.45) 2px),linear-gradient(#62140c 0px 2px,#683c0e 2px 4px,#683c0e 4px 6px,#683c0e 6px 8px,#683c0e 8px 10px,#683c0e 10px 12px,#683c0e 12px 14px,#683c0e 14px 16px,#683c0e 16px 18px,#683c0e 18px 20px,#683c0e 20px 22px,#233f12 22px 24px,#233f12 24px 26px,#233f12 26px 28px,#233f12 28px 30px,#233f12 30px 32px,#233f12 32px 34px,#233f12 34px 36px,#233f12 36px 38px,#dc3a1c 38px 40px);"></div><div style="position:absolute;left:569.02px;top:124px;width:9.4px;height:40px;background:repeating-linear-gradient(rgba(0,0,0,0) 0px,rgba(0,0,0,0) 1.45px,rgba(8,10,6,.45) 1.45px,rgba(8,10,6,.45) 2px),linear-gradient(#62140c 0px 2px,#683c0e 2px 4px,#683c0e 4px 6px,#683c0e 6px 8px,#683c0e 8px 10px,#683c0e 10px 12px,#683c0e 12px 14px,#683c0e 14px 16px,#683c0e 16px 18px,#683c0e 18px 20px,#683c0e 20px 22px,#233f12 22px 24px,#233f12 24px 26px,#233f12 26px 28px,#233f12 28px 30px,#233f12 30px 32px,#233f12 32px 34px,#233f12 34px 36px,#233f12 36px 38px,#dc3a1c 38px 40px);"></div><div style="position:absolute;left:579.94px;top:124px;width:9.4px;height:40px;background:repeating-linear-gradient(rgba(0,0,0,0) 0px,rgba(0,0,0,0) 1.45px,rgba(8,10,6,.45) 1.45px,rgba(8,10,6,.45) 2px),linear-gradient(#62140c 0px 2px,#683c0e 2px 4px,#683c0e 4px 6px,#683c0e 6px 8px,#683c0e 8px 10px,#683c0e 10px 12px,#683c0e 12px 14px,#683c0e 14px 16px,#683c0e 16px 18px,#683c0e 18px 20px,#683c0e 20px 22px,#233f12 22px 24px,#233f12 24px 26px,#233f12 26px 28px,#233f12 28px 30px,#233f12 30px 32px,#233f12 32px 34px,#233f12 34px 36px,#233f12 36px 38px,#dc3a1c 38px 40px);"></div><div style="position:absolute;left:590.86px;top:124px;width:9.4px;height:40px;background:repeating-linear-gradient(rgba(0,0,0,0) 0px,rgba(0,0,0,0) 1.45px,rgba(8,10,6,.45) 1.45px,rgba(8,10,6,.45) 2px),linear-gradient(#62140c 0px 2px,#683c0e 2px 4px,#683c0e 4px 6px,#683c0e 6px 8px,#683c0e 8px 10px,#683c0e 10px 12px,#683c0e 12px 14px,#683c0e 14px 16px,#683c0e 16px 18px,#683c0e 18px 20px,#683c0e 20px 22px,#233f12 22px 24px,#233f12 24px 26px,#233f12 26px 28px,#233f12 28px 30px,#233f12 30px 32px,#233f12 32px 34px,#233f12 34px 36px,#233f12 36px 38px,#dc3a1c 38px 40px);"></div><div style="position:absolute;left:601.78px;top:124px;width:9.4px;height:40px;background:repeating-linear-gradient(rgba(0,0,0,0) 0px,rgba(0,0,0,0) 1.45px,rgba(8,10,6,.45) 1.45px,rgba(8,10,6,.45) 2px),linear-gradient(#62140c 0px 2px,#683c0e 2px 4px,#683c0e 4px 6px,#683c0e 6px 8px,#683c0e 8px 10px,#683c0e 10px 12px,#683c0e 12px 14px,#683c0e 14px 16px,#683c0e 16px 18px,#683c0e 18px 20px,#683c0e 20px 22px,#233f12 22px 24px,#233f12 24px 26px,#233f12 26px 28px,#233f12 28px 30px,#233f12 30px 32px,#233f12 32px 34px,#233f12 34px 36px,#233f12 36px 38px,#dc3a1c 38px 40px);"></div><div style="position:absolute;left:612.70px;top:124px;width:9.4px;height:40px;background:repeating-linear-gradient(rgba(0,0,0,0) 0px,rgba(0,0,0,0) 1.45px,rgba(8,10,6,.45) 1.45px,rgba(8,10,6,.45) 2px),linear-gradient(#62140c 0px 2px,#683c0e 2px 4px,#683c0e 4px 6px,#683c0e 6px 8px,#683c0e 8px 10px,#683c0e 10px 12px,#683c0e 12px 14px,#683c0e 14px 16px,#683c0e 16px 18px,#683c0e 18px 20px,#683c0e 20px 22px,#233f12 22px 24px,#233f12 24px 26px,#233f12 26px 28px,#233f12 28px 30px,#233f12 30px 32px,#233f12 32px 34px,#233f12 34px 36px,#233f12 36px 38px,#dc3a1c 38px 40px);"></div><div style="position:absolute;left:623.62px;top:124px;width:9.4px;height:40px;background:repeating-linear-gradient(rgba(0,0,0,0) 0px,rgba(0,0,0,0) 1.45px,rgba(8,10,6,.45) 1.45px,rgba(8,10,6,.45) 2px),linear-gradient(#62140c 0px 2px,#683c0e 2px 4px,#683c0e 4px 6px,#683c0e 6px 8px,#683c0e 8px 10px,#683c0e 10px 12px,#683c0e 12px 14px,#683c0e 14px 16px,#683c0e 16px 18px,#683c0e 18px 20px,#683c0e 20px 22px,#233f12 22px 24px,#233f12 24px 26px,#233f12 26px 28px,#233f12 28px 30px,#233f12 30px 32px,#233f12 32px 34px,#233f12 34px 36px,#233f12 36px 38px,#dc3a1c 38px 40px);"></div><div style="position:absolute;left:634.54px;top:124px;width:9.4px;height:40px;background:repeating-linear-gradient(rgba(0,0,0,0) 0px,rgba(0,0,0,0) 1.45px,rgba(8,10,6,.45) 1.45px,rgba(8,10,6,.45) 2px),linear-gradient(#62140c 0px 2px,#683c0e 2px 4px,#683c0e 4px 6px,#683c0e 6px 8px,#683c0e 8px 10px,#683c0e 10px 12px,#683c0e 12px 14px,#683c0e 14px 16px,#683c0e 16px 18px,#683c0e 18px 20px,#683c0e 20px 22px,#233f12 22px 24px,#233f12 24px 26px,#233f12 26px 28px,#233f12 28px 30px,#233f12 30px 32px,#233f12 32px 34px,#233f12 34px 36px,#233f12 36px 38px,#dc3a1c 38px 40px);"></div><div style="position:absolute;left:650.10px;top:124px;width:85.84px;height:40px;background:#0b0d0c"></div><div style="position:absolute;left:650.10px;top:124px;width:9.4px;height:40px;background:repeating-linear-gradient(rgba(0,0,0,0) 0px,rgba(0,0,0,0) 1.45px,rgba(8,10,6,.45) 1.45px,rgba(8,10,6,.45) 2px),linear-gradient(#62140c 0px 2px,#683c0e 2px 4px,#683c0e 4px 6px,#683c0e 6px 8px,#683c0e 8px 10px,#683c0e 10px 12px,#683c0e 12px 14px,#683c0e 14px 16px,#683c0e 16px 18px,#683c0e 18px 20px,#683c0e 20px 22px,#233f12 22px 24px,#233f12 24px 26px,#233f12 26px 28px,#233f12 28px 30px,#233f12 30px 32px,#233f12 32px 34px,#233f12 34px 36px,#233f12 36px 38px,#dc3a1c 38px 40px);"></div><div style="position:absolute;left:661.02px;top:124px;width:9.4px;height:40px;background:repeating-linear-gradient(rgba(0,0,0,0) 0px,rgba(0,0,0,0) 1.45px,rgba(8,10,6,.45) 1.45px,rgba(8,10,6,.45) 2px),linear-gradient(#62140c 0px 2px,#683c0e 2px 4px,#683c0e 4px 6px,#683c0e 6px 8px,#683c0e 8px 10px,#683c0e 10px 12px,#683c0e 12px 14px,#683c0e 14px 16px,#683c0e 16px 18px,#683c0e 18px 20px,#683c0e 20px 22px,#233f12 22px 24px,#233f12 24px 26px,#233f12 26px 28px,#233f12 28px 30px,#233f12 30px 32px,#233f12 32px 34px,#233f12 34px 36px,#233f12 36px 38px,#dc3a1c 38px 40px);"></div><div style="position:absolute;left:671.94px;top:124px;width:9.4px;height:40px;background:repeating-linear-gradient(rgba(0,0,0,0) 0px,rgba(0,0,0,0) 1.45px,rgba(8,10,6,.45) 1.45px,rgba(8,10,6,.45) 2px),linear-gradient(#62140c 0px 2px,#683c0e 2px 4px,#683c0e 4px 6px,#683c0e 6px 8px,#683c0e 8px 10px,#683c0e 10px 12px,#683c0e 12px 14px,#683c0e 14px 16px,#683c0e 16px 18px,#683c0e 18px 20px,#683c0e 20px 22px,#233f12 22px 24px,#233f12 24px 26px,#233f12 26px 28px,#233f12 28px 30px,#233f12 30px 32px,#233f12 32px 34px,#233f12 34px 36px,#233f12 36px 38px,#dc3a1c 38px 40px);"></div><div style="position:absolute;left:682.86px;top:124px;width:9.4px;height:40px;background:repeating-linear-gradient(rgba(0,0,0,0) 0px,rgba(0,0,0,0) 1.45px,rgba(8,10,6,.45) 1.45px,rgba(8,10,6,.45) 2px),linear-gradient(#62140c 0px 2px,#683c0e 2px 4px,#683c0e 4px 6px,#683c0e 6px 8px,#683c0e 8px 10px,#683c0e 10px 12px,#683c0e 12px 14px,#683c0e 14px 16px,#683c0e 16px 18px,#683c0e 18px 20px,#683c0e 20px 22px,#233f12 22px 24px,#233f12 24px 26px,#233f12 26px 28px,#233f12 28px 30px,#233f12 30px 32px,#233f12 32px 34px,#233f12 34px 36px,#233f12 36px 38px,#dc3a1c 38px 40px);"></div><div style="position:absolute;left:693.78px;top:124px;width:9.4px;height:40px;background:repeating-linear-gradient(rgba(0,0,0,0) 0px,rgba(0,0,0,0) 1.45px,rgba(8,10,6,.45) 1.45px,rgba(8,10,6,.45) 2px),linear-gradient(#62140c 0px 2px,#683c0e 2px 4px,#683c0e 4px 6px,#683c0e 6px 8px,#683c0e 8px 10px,#683c0e 10px 12px,#683c0e 12px 14px,#683c0e 14px 16px,#683c0e 16px 18px,#683c0e 18px 20px,#683c0e 20px 22px,#233f12 22px 24px,#233f12 24px 26px,#233f12 26px 28px,#233f12 28px 30px,#233f12 30px 32px,#233f12 32px 34px,#233f12 34px 36px,#233f12 36px 38px,#dc3a1c 38px 40px);"></div><div style="position:absolute;left:704.70px;top:124px;width:9.4px;height:40px;background:repeating-linear-gradient(rgba(0,0,0,0) 0px,rgba(0,0,0,0) 1.45px,rgba(8,10,6,.45) 1.45px,rgba(8,10,6,.45) 2px),linear-gradient(#62140c 0px 2px,#683c0e 2px 4px,#683c0e 4px 6px,#683c0e 6px 8px,#683c0e 8px 10px,#683c0e 10px 12px,#683c0e 12px 14px,#683c0e 14px 16px,#683c0e 16px 18px,#683c0e 18px 20px,#683c0e 20px 22px,#233f12 22px 24px,#233f12 24px 26px,#233f12 26px 28px,#233f12 28px 30px,#233f12 30px 32px,#233f12 32px 34px,#233f12 34px 36px,#233f12 36px 38px,#dc3a1c 38px 40px);"></div><div style="position:absolute;left:715.62px;top:124px;width:9.4px;height:40px;background:repeating-linear-gradient(rgba(0,0,0,0) 0px,rgba(0,0,0,0) 1.45px,rgba(8,10,6,.45) 1.45px,rgba(8,10,6,.45) 2px),linear-gradient(#62140c 0px 2px,#683c0e 2px 4px,#683c0e 4px 6px,#683c0e 6px 8px,#683c0e 8px 10px,#683c0e 10px 12px,#683c0e 12px 14px,#683c0e 14px 16px,#683c0e 16px 18px,#683c0e 18px 20px,#683c0e 20px 22px,#233f12 22px 24px,#233f12 24px 26px,#233f12 26px 28px,#233f12 28px 30px,#233f12 30px 32px,#233f12 32px 34px,#233f12 34px 36px,#233f12 36px 38px,#dc3a1c 38px 40px);"></div><div style="position:absolute;left:726.54px;top:124px;width:9.4px;height:40px;background:repeating-linear-gradient(rgba(0,0,0,0) 0px,rgba(0,0,0,0) 1.45px,rgba(8,10,6,.45) 1.45px,rgba(8,10,6,.45) 2px),linear-gradient(#62140c 0px 2px,#683c0e 2px 4px,#683c0e 4px 6px,#683c0e 6px 8px,#683c0e 8px 10px,#683c0e 10px 12px,#683c0e 12px 14px,#683c0e 14px 16px,#683c0e 16px 18px,#683c0e 18px 20px,#683c0e 20px 22px,#233f12 22px 24px,#233f12 24px 26px,#233f12 26px 28px,#233f12 28px 30px,#233f12 30px 32px,#233f12 32px 34px,#233f12 34px 36px,#233f12 36px 38px,#dc3a1c 38px 40px);"></div><div style="position:absolute;left:741.40px;top:124px;width:87.12px;height:40px;background:#0b0d0c"></div><div style="position:absolute;left:741.40px;top:124px;width:8.4px;height:40px;background:repeating-linear-gradient(rgba(0,0,0,0) 0px,rgba(0,0,0,0) 1.45px,rgba(8,10,6,.45) 1.45px,rgba(8,10,6,.45) 2px),linear-gradient(#62140c 0px 2px,#683c0e 2px 4px,#683c0e 4px 6px,#683c0e 6px 8px,#683c0e 8px 10px,#683c0e 10px 12px,#683c0e 12px 14px,#683c0e 14px 16px,#683c0e 16px 18px,#683c0e 18px 20px,#683c0e 20px 22px,#233f12 22px 24px,#233f12 24px 26px,#233f12 26px 28px,#233f12 28px 30px,#233f12 30px 32px,#233f12 32px 34px,#233f12 34px 36px,#233f12 36px 38px,#dc3a1c 38px 40px);"></div><div style="position:absolute;left:751.24px;top:124px;width:8.4px;height:40px;background:repeating-linear-gradient(rgba(0,0,0,0) 0px,rgba(0,0,0,0) 1.45px,rgba(8,10,6,.45) 1.45px,rgba(8,10,6,.45) 2px),linear-gradient(#62140c 0px 2px,#683c0e 2px 4px,#683c0e 4px 6px,#683c0e 6px 8px,#683c0e 8px 10px,#683c0e 10px 12px,#683c0e 12px 14px,#683c0e 14px 16px,#683c0e 16px 18px,#683c0e 18px 20px,#683c0e 20px 22px,#233f12 22px 24px,#233f12 24px 26px,#233f12 26px 28px,#233f12 28px 30px,#233f12 30px 32px,#233f12 32px 34px,#233f12 34px 36px,#233f12 36px 38px,#dc3a1c 38px 40px);"></div><div style="position:absolute;left:761.08px;top:124px;width:8.4px;height:40px;background:repeating-linear-gradient(rgba(0,0,0,0) 0px,rgba(0,0,0,0) 1.45px,rgba(8,10,6,.45) 1.45px,rgba(8,10,6,.45) 2px),linear-gradient(#62140c 0px 2px,#683c0e 2px 4px,#683c0e 4px 6px,#683c0e 6px 8px,#683c0e 8px 10px,#683c0e 10px 12px,#683c0e 12px 14px,#683c0e 14px 16px,#683c0e 16px 18px,#683c0e 18px 20px,#683c0e 20px 22px,#233f12 22px 24px,#233f12 24px 26px,#233f12 26px 28px,#233f12 28px 30px,#233f12 30px 32px,#233f12 32px 34px,#233f12 34px 36px,#233f12 36px 38px,#dc3a1c 38px 40px);"></div><div style="position:absolute;left:770.92px;top:124px;width:8.4px;height:40px;background:repeating-linear-gradient(rgba(0,0,0,0) 0px,rgba(0,0,0,0) 1.45px,rgba(8,10,6,.45) 1.45px,rgba(8,10,6,.45) 2px),linear-gradient(#62140c 0px 2px,#683c0e 2px 4px,#683c0e 4px 6px,#683c0e 6px 8px,#683c0e 8px 10px,#683c0e 10px 12px,#683c0e 12px 14px,#683c0e 14px 16px,#683c0e 16px 18px,#683c0e 18px 20px,#683c0e 20px 22px,#233f12 22px 24px,#233f12 24px 26px,#233f12 26px 28px,#233f12 28px 30px,#233f12 30px 32px,#233f12 32px 34px,#233f12 34px 36px,#233f12 36px 38px,#dc3a1c 38px 40px);"></div><div style="position:absolute;left:780.76px;top:124px;width:8.4px;height:40px;background:repeating-linear-gradient(rgba(0,0,0,0) 0px,rgba(0,0,0,0) 1.45px,rgba(8,10,6,.45) 1.45px,rgba(8,10,6,.45) 2px),linear-gradient(#62140c 0px 2px,#683c0e 2px 4px,#683c0e 4px 6px,#683c0e 6px 8px,#683c0e 8px 10px,#683c0e 10px 12px,#683c0e 12px 14px,#683c0e 14px 16px,#683c0e 16px 18px,#683c0e 18px 20px,#683c0e 20px 22px,#233f12 22px 24px,#233f12 24px 26px,#233f12 26px 28px,#233f12 28px 30px,#233f12 30px 32px,#233f12 32px 34px,#233f12 34px 36px,#233f12 36px 38px,#dc3a1c 38px 40px);"></div><div style="position:absolute;left:790.60px;top:124px;width:8.4px;height:40px;background:repeating-linear-gradient(rgba(0,0,0,0) 0px,rgba(0,0,0,0) 1.45px,rgba(8,10,6,.45) 1.45px,rgba(8,10,6,.45) 2px),linear-gradient(#62140c 0px 2px,#683c0e 2px 4px,#683c0e 4px 6px,#683c0e 6px 8px,#683c0e 8px 10px,#683c0e 10px 12px,#683c0e 12px 14px,#683c0e 14px 16px,#683c0e 16px 18px,#683c0e 18px 20px,#683c0e 20px 22px,#233f12 22px 24px,#233f12 24px 26px,#233f12 26px 28px,#233f12 28px 30px,#233f12 30px 32px,#233f12 32px 34px,#233f12 34px 36px,#233f12 36px 38px,#dc3a1c 38px 40px);"></div><div style="position:absolute;left:800.44px;top:124px;width:8.4px;height:40px;background:repeating-linear-gradient(rgba(0,0,0,0) 0px,rgba(0,0,0,0) 1.45px,rgba(8,10,6,.45) 1.45px,rgba(8,10,6,.45) 2px),linear-gradient(#62140c 0px 2px,#683c0e 2px 4px,#683c0e 4px 6px,#683c0e 6px 8px,#683c0e 8px 10px,#683c0e 10px 12px,#683c0e 12px 14px,#683c0e 14px 16px,#683c0e 16px 18px,#683c0e 18px 20px,#683c0e 20px 22px,#233f12 22px 24px,#233f12 24px 26px,#233f12 26px 28px,#233f12 28px 30px,#233f12 30px 32px,#233f12 32px 34px,#233f12 34px 36px,#233f12 36px 38px,#dc3a1c 38px 40px);"></div><div style="position:absolute;left:810.28px;top:124px;width:8.4px;height:40px;background:repeating-linear-gradient(rgba(0,0,0,0) 0px,rgba(0,0,0,0) 1.45px,rgba(8,10,6,.45) 1.45px,rgba(8,10,6,.45) 2px),linear-gradient(#62140c 0px 2px,#683c0e 2px 4px,#683c0e 4px 6px,#683c0e 6px 8px,#683c0e 8px 10px,#683c0e 10px 12px,#683c0e 12px 14px,#683c0e 14px 16px,#683c0e 16px 18px,#683c0e 18px 20px,#683c0e 20px 22px,#233f12 22px 24px,#233f12 24px 26px,#233f12 26px 28px,#233f12 28px 30px,#dc3a1c 30px 32px,#233f12 32px 34px,#233f12 34px 36px,#7ef224 36px 38px,#7ef224 38px 40px);"></div><div style="position:absolute;left:820.12px;top:124px;width:8.4px;height:40px;background:repeating-linear-gradient(rgba(0,0,0,0) 0px,rgba(0,0,0,0) 1.45px,rgba(8,10,6,.45) 1.45px,rgba(8,10,6,.45) 2px),linear-gradient(#62140c 0px 2px,#683c0e 2px 4px,#683c0e 4px 6px,#683c0e 6px 8px,#683c0e 8px 10px,#683c0e 10px 12px,#683c0e 12px 14px,#683c0e 14px 16px,#683c0e 16px 18px,#683c0e 18px 20px,#683c0e 20px 22px,#233f12 22px 24px,#233f12 24px 26px,#233f12 26px 28px,#233f12 28px 30px,#dc3a1c 30px 32px,#233f12 32px 34px,#233f12 34px 36px,#7ef224 36px 38px,#7ef224 38px 40px);"></div><div style="position:absolute;left:833.00px;top:124px;width:85.70px;height:40px;background:#0b0d0c"></div><div style="position:absolute;left:833.00px;top:124px;width:9.4px;height:40px;background:repeating-linear-gradient(rgba(0,0,0,0) 0px,rgba(0,0,0,0) 1.45px,rgba(8,10,6,.45) 1.45px,rgba(8,10,6,.45) 2px),linear-gradient(#62140c 0px 2px,#683c0e 2px 4px,#683c0e 4px 6px,#683c0e 6px 8px,#683c0e 8px 10px,#683c0e 10px 12px,#683c0e 12px 14px,#683c0e 14px 16px,#683c0e 16px 18px,#683c0e 18px 20px,#683c0e 20px 22px,#233f12 22px 24px,#233f12 24px 26px,#233f12 26px 28px,#233f12 28px 30px,#233f12 30px 32px,#233f12 32px 34px,#233f12 34px 36px,#233f12 36px 38px,#dc3a1c 38px 40px);"></div><div style="position:absolute;left:843.90px;top:124px;width:9.4px;height:40px;background:repeating-linear-gradient(rgba(0,0,0,0) 0px,rgba(0,0,0,0) 1.45px,rgba(8,10,6,.45) 1.45px,rgba(8,10,6,.45) 2px),linear-gradient(#62140c 0px 2px,#683c0e 2px 4px,#683c0e 4px 6px,#683c0e 6px 8px,#683c0e 8px 10px,#683c0e 10px 12px,#683c0e 12px 14px,#683c0e 14px 16px,#683c0e 16px 18px,#683c0e 18px 20px,#683c0e 20px 22px,#233f12 22px 24px,#233f12 24px 26px,#233f12 26px 28px,#233f12 28px 30px,#233f12 30px 32px,#233f12 32px 34px,#233f12 34px 36px,#233f12 36px 38px,#dc3a1c 38px 40px);"></div><div style="position:absolute;left:854.80px;top:124px;width:9.4px;height:40px;background:repeating-linear-gradient(rgba(0,0,0,0) 0px,rgba(0,0,0,0) 1.45px,rgba(8,10,6,.45) 1.45px,rgba(8,10,6,.45) 2px),linear-gradient(#62140c 0px 2px,#683c0e 2px 4px,#683c0e 4px 6px,#683c0e 6px 8px,#683c0e 8px 10px,#683c0e 10px 12px,#683c0e 12px 14px,#683c0e 14px 16px,#683c0e 16px 18px,#683c0e 18px 20px,#683c0e 20px 22px,#233f12 22px 24px,#233f12 24px 26px,#233f12 26px 28px,#233f12 28px 30px,#233f12 30px 32px,#233f12 32px 34px,#233f12 34px 36px,#233f12 36px 38px,#dc3a1c 38px 40px);"></div><div style="position:absolute;left:865.70px;top:124px;width:9.4px;height:40px;background:repeating-linear-gradient(rgba(0,0,0,0) 0px,rgba(0,0,0,0) 1.45px,rgba(8,10,6,.45) 1.45px,rgba(8,10,6,.45) 2px),linear-gradient(#62140c 0px 2px,#683c0e 2px 4px,#683c0e 4px 6px,#683c0e 6px 8px,#683c0e 8px 10px,#683c0e 10px 12px,#683c0e 12px 14px,#683c0e 14px 16px,#683c0e 16px 18px,#683c0e 18px 20px,#683c0e 20px 22px,#233f12 22px 24px,#233f12 24px 26px,#233f12 26px 28px,#233f12 28px 30px,#233f12 30px 32px,#233f12 32px 34px,#233f12 34px 36px,#233f12 36px 38px,#dc3a1c 38px 40px);"></div><div style="position:absolute;left:876.60px;top:124px;width:9.4px;height:40px;background:repeating-linear-gradient(rgba(0,0,0,0) 0px,rgba(0,0,0,0) 1.45px,rgba(8,10,6,.45) 1.45px,rgba(8,10,6,.45) 2px),linear-gradient(#62140c 0px 2px,#683c0e 2px 4px,#683c0e 4px 6px,#683c0e 6px 8px,#683c0e 8px 10px,#683c0e 10px 12px,#683c0e 12px 14px,#683c0e 14px 16px,#683c0e 16px 18px,#683c0e 18px 20px,#683c0e 20px 22px,#233f12 22px 24px,#233f12 24px 26px,#233f12 26px 28px,#233f12 28px 30px,#233f12 30px 32px,#233f12 32px 34px,#233f12 34px 36px,#233f12 36px 38px,#dc3a1c 38px 40px);"></div><div style="position:absolute;left:887.50px;top:124px;width:9.4px;height:40px;background:repeating-linear-gradient(rgba(0,0,0,0) 0px,rgba(0,0,0,0) 1.45px,rgba(8,10,6,.45) 1.45px,rgba(8,10,6,.45) 2px),linear-gradient(#62140c 0px 2px,#683c0e 2px 4px,#683c0e 4px 6px,#683c0e 6px 8px,#683c0e 8px 10px,#683c0e 10px 12px,#683c0e 12px 14px,#683c0e 14px 16px,#683c0e 16px 18px,#683c0e 18px 20px,#683c0e 20px 22px,#233f12 22px 24px,#233f12 24px 26px,#233f12 26px 28px,#233f12 28px 30px,#233f12 30px 32px,#233f12 32px 34px,#233f12 34px 36px,#233f12 36px 38px,#dc3a1c 38px 40px);"></div><div style="position:absolute;left:898.40px;top:124px;width:9.4px;height:40px;background:repeating-linear-gradient(rgba(0,0,0,0) 0px,rgba(0,0,0,0) 1.45px,rgba(8,10,6,.45) 1.45px,rgba(8,10,6,.45) 2px),linear-gradient(#62140c 0px 2px,#683c0e 2px 4px,#683c0e 4px 6px,#683c0e 6px 8px,#683c0e 8px 10px,#683c0e 10px 12px,#683c0e 12px 14px,#683c0e 14px 16px,#683c0e 16px 18px,#683c0e 18px 20px,#683c0e 20px 22px,#233f12 22px 24px,#233f12 24px 26px,#233f12 26px 28px,#233f12 28px 30px,#233f12 30px 32px,#233f12 32px 34px,#233f12 34px 36px,#233f12 36px 38px,#dc3a1c 38px 40px);"></div><div style="position:absolute;left:909.30px;top:124px;width:9.4px;height:40px;background:repeating-linear-gradient(rgba(0,0,0,0) 0px,rgba(0,0,0,0) 1.45px,rgba(8,10,6,.45) 1.45px,rgba(8,10,6,.45) 2px),linear-gradient(#62140c 0px 2px,#683c0e 2px 4px,#683c0e 4px 6px,#683c0e 6px 8px,#683c0e 8px 10px,#683c0e 10px 12px,#683c0e 12px 14px,#683c0e 14px 16px,#683c0e 16px 18px,#683c0e 18px 20px,#683c0e 20px 22px,#233f12 22px 24px,#233f12 24px 26px,#233f12 26px 28px,#233f12 28px 30px,#233f12 30px 32px,#233f12 32px 34px,#233f12 34px 36px,#233f12 36px 38px,#dc3a1c 38px 40px);"></div><svg width="0" height="0" style="position:absolute"><defs>
<linearGradient id="fcg" x1="0" y1="0" x2="0" y2="1">
<stop offset="0" stop-color="#dedede"/><stop offset="0.04" stop-color="#f2f2f2"/><stop offset="0.10" stop-color="#e4e4e4"/>
<stop offset="0.13" stop-color="#b4b4b4"/><stop offset="0.17" stop-color="#c6c6c6"/><stop offset="0.30" stop-color="#b6b6b6"/>
<stop offset="0.42" stop-color="#c4c4c4"/><stop offset="0.445" stop-color="#c2c2c2"/><stop offset="0.46" stop-color="#8e8e8e"/>
<stop offset="0.48" stop-color="#ececec"/><stop offset="0.62" stop-color="#d8d8d8"/><stop offset="0.80" stop-color="#eeeeee"/>
<stop offset="0.83" stop-color="#dedede"/><stop offset="0.86" stop-color="#8c8c8c"/><stop offset="0.95" stop-color="#6e6e6e"/>
<stop offset="1" stop-color="#4c4c4c"/></linearGradient>
<filter id="blr" x="-50%" y="-50%" width="200%" height="200%"><feGaussianBlur stdDeviation="2"/></filter>
</defs></svg><div style="position:absolute;left:0px;top:168.5px;width:90.5px;height:631.5px;background:#2a2933;"></div><div style="position:absolute;left:92px;top:168.5px;width:90.5px;height:631.5px;background:#2a2933;"></div><div style="position:absolute;left:184px;top:168.5px;width:90.5px;height:631.5px;background:#2a2933;"></div><div style="position:absolute;left:276px;top:168.5px;width:90.5px;height:631.5px;background:#2a2933;"></div><div style="position:absolute;left:368px;top:168.5px;width:90.5px;height:631.5px;background:#2a2933;"></div><div style="position:absolute;left:460px;top:168.5px;width:90.5px;height:631.5px;background:#2a2933;"></div><div style="position:absolute;left:552px;top:168.5px;width:90.5px;height:631.5px;background:#2a2933;"></div><div style="position:absolute;left:644px;top:168.5px;width:90.5px;height:631.5px;background:#2a2933;"></div><div style="position:absolute;left:736px;top:168.5px;width:90.5px;height:631.5px;background:#2a2933;"></div><div style="position:absolute;left:828px;top:168.5px;width:90.5px;height:631.5px;background:#2a2933;"></div><div style="position:absolute;left:45px;top:174px;width:42px;height:21px;background:#22c060;"></div><div style="position:absolute;left:59.6px;top:175px;font-size:22.5px;line-height:1;color:#f4f4f4;white-space:nowrap;letter-spacing:0px;-webkit-text-stroke:0.3px #f4f4f4;transform:scaleX(0.9);transform-origin:0 0;">G</div><div style="position:absolute;left:2px;top:197px;width:42px;height:21px;background:#264838;"></div><div style="position:absolute;left:45px;top:197px;width:42px;height:21px;background:#22c060;"></div><div style="position:absolute;left:2px;top:197px;width:42px;height:21px;overflow:hidden;"><div style="position:absolute;left:5.5px;top:0.5px;font-size:22px;line-height:1;color:#f4f4f4;-webkit-text-stroke:0.3px #f4f4f4;transform:scaleX(0.95);transform-origin:0 0">EQ</div></div><div style="position:absolute;left:59px;top:198px;font-size:22px;line-height:1;color:#f4f4f4;white-space:nowrap;letter-spacing:0px;-webkit-text-stroke:0.3px #f4f4f4;transform:scaleX(0.88);transform-origin:0 0;">D</div><div style="position:absolute;left:2px;top:220.5px;width:86px;height:81.5px;background:#f4ec48;"></div><div style="position:absolute;left:-154.5px;width:400px;top:250.5px;text-align:center;font-size:23px;line-height:1;color:#141414;white-space:nowrap;letter-spacing:0.35px;text-indent:0.35px;-webkit-text-stroke:0.3px #141414;">HiHat</div><svg style="position:absolute;left:0px;top:300px" width="92" height="65" viewBox="0 300 92 65"><line x1="2" y1="335.8" x2="89" y2="335.8" stroke="#6f6e76" stroke-width="2"/><path d="M1.6 361.4 L28 361.4 C30 356 32 346 35 340 C37 336.5 40 335.8 44 335.8 L89 335.8" fill="none" stroke="#22f022" stroke-width="3.3" stroke-linejoin="round" stroke-linecap="round"/></svg><div style="position:absolute;left:5.6px;top:363.8px;width:80.6px;height:43.7px;background:#1f2530;box-sizing:border-box;border:1.7px solid #2a9ab0;"></div><div style="position:absolute;left:45px;top:363.8px;width:2px;height:44px;background:#e8eef8;"></div><div style="position:absolute;left:1px;top:413px;width:89px;height:57.6px;background:#7a4c02;"></div><div style="position:absolute;left:-153.5px;width:400px;top:431.5px;text-align:center;font-size:23px;line-height:1;color:#f6e8cc;white-space:nowrap;letter-spacing:0px;text-indent:0px;transform:scaleX(0.91);transform-origin:50% 0;-webkit-text-stroke:0.3px #f6e8cc;">SOLO</div><div style="position:absolute;left:2px;top:477.8px;width:87.8px;height:57.8px;background:#5c1414;"></div><div style="position:absolute;left:-152.5px;width:400px;top:496.5px;text-align:center;font-size:23px;line-height:1;color:#f6e6e6;white-space:nowrap;letter-spacing:0px;text-indent:0px;transform:scaleX(0.96);transform-origin:50% 0;-webkit-text-stroke:0.3px #f6e6e6;">MUTE</div><svg style="position:absolute;left:24.5px;top:551px" width="22" height="9" viewBox="0 0 22 9">
<path d="M0.5 4 L5 4" stroke="#f0f0f0" stroke-width="1.4"/>
<path d="M14.3 4.5 C12.5 2 11.5 1.1 10.3 1.1 C8.6 1.1 7.3 2.5 7.3 4.5 C7.3 6.5 8.6 7.9 10.3 7.9 C11.5 7.9 12.5 7 14.3 4.5 C16.1 2 17.1 1.1 18.3 1.1 C20 1.1 21.2 2.5 21.2 4.5 C21.2 6.5 20 7.9 18.3 7.9 C17.1 7.9 16.1 7 14.3 4.5Z" stroke="#f0f0f0" stroke-width="1.5" fill="none"/></svg><div style="position:absolute;left:18px;top:587.9px;width:40px;height:1.4px;background:#76767c;"></div><div style="position:absolute;left:4.4px;top:581.2px;font-size:12.3px;line-height:1;color:#8e8e92;white-space:nowrap;letter-spacing:0.1px;-webkit-text-stroke:0px #8e8e92;">10</div><div style="position:absolute;left:18px;top:608.4px;width:40px;height:1.4px;background:#76767c;"></div><div style="position:absolute;left:4.4px;top:601.7px;font-size:12.3px;line-height:1;color:#8e8e92;white-space:nowrap;letter-spacing:0.1px;-webkit-text-stroke:0px #8e8e92;">5</div><div style="position:absolute;left:18px;top:628.9px;width:40px;height:1.4px;background:#ededed;"></div><div style="position:absolute;left:4.4px;top:622.2px;font-size:12.3px;line-height:1;color:#8e8e92;white-space:nowrap;letter-spacing:0.1px;-webkit-text-stroke:0px #8e8e92;">0</div><div style="position:absolute;left:18px;top:649.4px;width:40px;height:1.4px;background:#76767c;"></div><div style="position:absolute;left:4.4px;top:642.7px;font-size:12.3px;line-height:1;color:#8e8e92;white-space:nowrap;letter-spacing:0.1px;-webkit-text-stroke:0px #8e8e92;">5</div><div style="position:absolute;left:18px;top:669.9px;width:40px;height:1.4px;background:#76767c;"></div><div style="position:absolute;left:4.4px;top:663.2px;font-size:12.3px;line-height:1;color:#8e8e92;white-space:nowrap;letter-spacing:0.1px;-webkit-text-stroke:0px #8e8e92;">10</div><div style="position:absolute;left:18px;top:690.4px;width:40px;height:1.4px;background:#76767c;"></div><div style="position:absolute;left:4.4px;top:683.7px;font-size:12.3px;line-height:1;color:#8e8e92;white-space:nowrap;letter-spacing:0.1px;-webkit-text-stroke:0px #8e8e92;">20</div><div style="position:absolute;left:18px;top:710.9px;width:40px;height:1.4px;background:#76767c;"></div><div style="position:absolute;left:4.4px;top:704.2px;font-size:12.3px;line-height:1;color:#8e8e92;white-space:nowrap;letter-spacing:0.1px;-webkit-text-stroke:0px #8e8e92;">30</div><div style="position:absolute;left:18px;top:731.4px;width:40px;height:1.4px;background:#76767c;"></div><div style="position:absolute;left:4.4px;top:724.7px;font-size:12.3px;line-height:1;color:#8e8e92;white-space:nowrap;letter-spacing:0.1px;-webkit-text-stroke:0px #8e8e92;">50</div><div style="position:absolute;left:33.1px;top:589px;width:5.6px;height:163px;background:#000;"></div><div style="position:absolute;left:67.2px;top:545.55px;width:7.4px;height:10px;background:#62140c;"></div><div style="position:absolute;left:67.2px;top:558.3px;width:7.4px;height:10px;background:#683c0e;"></div><div style="position:absolute;left:67.2px;top:571.05px;width:7.4px;height:10px;background:#683c0e;"></div><div style="position:absolute;left:67.2px;top:583.8px;width:7.4px;height:10px;background:#683c0e;"></div><div style="position:absolute;left:67.2px;top:596.55px;width:7.4px;height:10px;background:#683c0e;"></div><div style="position:absolute;left:67.2px;top:609.3px;width:7.4px;height:10px;background:#683c0e;"></div><div style="position:absolute;left:67.2px;top:622.05px;width:7.4px;height:10px;background:#683c0e;"></div><div style="position:absolute;left:67.2px;top:634.8px;width:7.4px;height:10px;background:#683c0e;"></div><div style="position:absolute;left:67.2px;top:647.55px;width:7.4px;height:10px;background:#dc3a1c;"></div><div style="position:absolute;left:67.2px;top:660.3px;width:7.4px;height:10px;background:#683c0e;"></div><div style="position:absolute;left:67.2px;top:673.05px;width:7.4px;height:10px;background:#f4c61e;"></div><div style="position:absolute;left:67.2px;top:685.8px;width:7.4px;height:10px;background:#7ef224;"></div><div style="position:absolute;left:67.2px;top:698.55px;width:7.4px;height:10px;background:#7ef224;"></div><div style="position:absolute;left:67.2px;top:711.3px;width:7.4px;height:10px;background:#7ef224;"></div><div style="position:absolute;left:67.2px;top:724.05px;width:7.4px;height:10px;background:#7ef224;"></div><div style="position:absolute;left:67.2px;top:736.8px;width:7.4px;height:10px;background:#7ef224;"></div><div style="position:absolute;left:67.2px;top:749.55px;width:7.4px;height:10px;background:#7ef224;"></div><div style="position:absolute;left:67.2px;top:762.3px;width:7.4px;height:10px;background:#7ef224;"></div><div style="position:absolute;left:67.2px;top:775.05px;width:7.4px;height:10px;background:#7ef224;"></div><div style="position:absolute;left:67.2px;top:787.8px;width:7.4px;height:10px;background:#7ef224;"></div><div style="position:absolute;left:76.6px;top:545px;width:4.2px;height:65px;background:repeating-linear-gradient(#5a1414 0 1.7px,#3e171c 1.7px 3.1px);"></div><div style="position:absolute;left:82.8px;top:545px;width:4.2px;height:89px;background:repeating-linear-gradient(#5a1414 0 1.7px,#3e171c 1.7px 3.1px);"></div><div style="position:absolute;left:83.6px;top:545.0px;width:3.4px;height:3.6px;background:#ec2e22;"></div><div style="position:absolute;left:83.6px;top:549.6px;width:3.4px;height:3.6px;background:#ec2e22;"></div><div style="position:absolute;left:83.6px;top:554.2px;width:3.4px;height:3.6px;background:#ec2e22;"></div><div style="position:absolute;left:83.6px;top:558.8px;width:3.4px;height:3.6px;background:#ec2e22;"></div><svg style="position:absolute;left:20px;top:722.5px;overflow:visible" width="29" height="60" viewBox="0 0 29 60">
<path d="M-3 2 L32 2 L32 62 L-3 62Z" fill="rgba(0,0,0,.35)" filter="url(#blr)"/>
<path d="M0 0 Q14.5 3 29 0 L29 60 Q14.5 57 0 60 Z" fill="url(#fcg)"/>
<path d="M0 0 L1.5 0 L1.5 60 L0 60Z M28.5 0 L30 0 L30 60 L28.5 60Z" fill="rgba(0,0,0,.08)"/>
</svg><div style="position:absolute;left:-165px;width:400px;top:785px;text-align:center;font-size:15.5px;line-height:1;color:#eeeeee;white-space:nowrap;letter-spacing:0px;text-indent:0px;transform:scaleX(0.9);transform-origin:50% 0;-webkit-text-stroke:0.12px #eeeeee;">CH 01</div><div style="position:absolute;left:137px;top:174px;width:42px;height:21px;background:#264838;"></div><div style="position:absolute;left:151.6px;top:175px;font-size:22.5px;line-height:1;color:#f4f4f4;white-space:nowrap;letter-spacing:0px;-webkit-text-stroke:0.3px #f4f4f4;transform:scaleX(0.9);transform-origin:0 0;">G</div><div style="position:absolute;left:94px;top:197px;width:42px;height:21px;background:#264838;"></div><div style="position:absolute;left:137px;top:197px;width:42px;height:21px;background:#264838;"></div><div style="position:absolute;left:94px;top:197px;width:42px;height:21px;overflow:hidden;"><div style="position:absolute;left:5.5px;top:0.5px;font-size:22px;line-height:1;color:#f4f4f4;-webkit-text-stroke:0.3px #f4f4f4;transform:scaleX(0.95);transform-origin:0 0">EQ</div></div><div style="position:absolute;left:151px;top:198px;font-size:22px;line-height:1;color:#f4f4f4;white-space:nowrap;letter-spacing:0px;-webkit-text-stroke:0.3px #f4f4f4;transform:scaleX(0.88);transform-origin:0 0;">D</div><div style="position:absolute;left:94px;top:220.5px;width:86px;height:81.5px;background:#f4ec48;"></div><div style="position:absolute;left:-62.5px;width:400px;top:250.5px;text-align:center;font-size:23px;line-height:1;color:#141414;white-space:nowrap;letter-spacing:0.35px;text-indent:0.35px;-webkit-text-stroke:0.3px #141414;">SD</div><svg style="position:absolute;left:92px;top:300px" width="92" height="65" viewBox="0 300 92 65"><line x1="2" y1="335.8" x2="89" y2="335.8" stroke="#6f6e76" stroke-width="2"/><path d="M1.6 335.8 L89 335.8" fill="none" stroke="#22f022" stroke-width="3.3" stroke-linejoin="round" stroke-linecap="round"/></svg><div style="position:absolute;left:97.6px;top:363.8px;width:80.6px;height:43.7px;background:#1f2530;box-sizing:border-box;border:1.7px solid #2a9ab0;"></div><div style="position:absolute;left:137px;top:363.8px;width:2px;height:44px;background:#e8eef8;"></div><div style="position:absolute;left:93px;top:413px;width:89px;height:57.6px;background:#7a4c02;"></div><div style="position:absolute;left:-61.5px;width:400px;top:431.5px;text-align:center;font-size:23px;line-height:1;color:#f6e8cc;white-space:nowrap;letter-spacing:0px;text-indent:0px;transform:scaleX(0.91);transform-origin:50% 0;-webkit-text-stroke:0.3px #f6e8cc;">SOLO</div><div style="position:absolute;left:94px;top:477.8px;width:87.8px;height:57.8px;background:#5c1414;"></div><div style="position:absolute;left:-60.5px;width:400px;top:496.5px;text-align:center;font-size:23px;line-height:1;color:#f6e6e6;white-space:nowrap;letter-spacing:0px;text-indent:0px;transform:scaleX(0.96);transform-origin:50% 0;-webkit-text-stroke:0.3px #f6e6e6;">MUTE</div><svg style="position:absolute;left:116.5px;top:551px" width="22" height="9" viewBox="0 0 22 9">
<path d="M0.5 4 L5 4" stroke="#f0f0f0" stroke-width="1.4"/>
<path d="M14.3 4.5 C12.5 2 11.5 1.1 10.3 1.1 C8.6 1.1 7.3 2.5 7.3 4.5 C7.3 6.5 8.6 7.9 10.3 7.9 C11.5 7.9 12.5 7 14.3 4.5 C16.1 2 17.1 1.1 18.3 1.1 C20 1.1 21.2 2.5 21.2 4.5 C21.2 6.5 20 7.9 18.3 7.9 C17.1 7.9 16.1 7 14.3 4.5Z" stroke="#f0f0f0" stroke-width="1.5" fill="none"/></svg><div style="position:absolute;left:110px;top:587.9px;width:40px;height:1.4px;background:#76767c;"></div><div style="position:absolute;left:96.4px;top:581.2px;font-size:12.3px;line-height:1;color:#8e8e92;white-space:nowrap;letter-spacing:0.1px;-webkit-text-stroke:0px #8e8e92;">10</div><div style="position:absolute;left:110px;top:608.4px;width:40px;height:1.4px;background:#76767c;"></div><div style="position:absolute;left:96.4px;top:601.7px;font-size:12.3px;line-height:1;color:#8e8e92;white-space:nowrap;letter-spacing:0.1px;-webkit-text-stroke:0px #8e8e92;">5</div><div style="position:absolute;left:110px;top:628.9px;width:40px;height:1.4px;background:#ededed;"></div><div style="position:absolute;left:96.4px;top:622.2px;font-size:12.3px;line-height:1;color:#8e8e92;white-space:nowrap;letter-spacing:0.1px;-webkit-text-stroke:0px #8e8e92;">0</div><div style="position:absolute;left:110px;top:649.4px;width:40px;height:1.4px;background:#76767c;"></div><div style="position:absolute;left:96.4px;top:642.7px;font-size:12.3px;line-height:1;color:#8e8e92;white-space:nowrap;letter-spacing:0.1px;-webkit-text-stroke:0px #8e8e92;">5</div><div style="position:absolute;left:110px;top:669.9px;width:40px;height:1.4px;background:#76767c;"></div><div style="position:absolute;left:96.4px;top:663.2px;font-size:12.3px;line-height:1;color:#8e8e92;white-space:nowrap;letter-spacing:0.1px;-webkit-text-stroke:0px #8e8e92;">10</div><div style="position:absolute;left:110px;top:690.4px;width:40px;height:1.4px;background:#76767c;"></div><div style="position:absolute;left:96.4px;top:683.7px;font-size:12.3px;line-height:1;color:#8e8e92;white-space:nowrap;letter-spacing:0.1px;-webkit-text-stroke:0px #8e8e92;">20</div><div style="position:absolute;left:110px;top:710.9px;width:40px;height:1.4px;background:#76767c;"></div><div style="position:absolute;left:96.4px;top:704.2px;font-size:12.3px;line-height:1;color:#8e8e92;white-space:nowrap;letter-spacing:0.1px;-webkit-text-stroke:0px #8e8e92;">30</div><div style="position:absolute;left:110px;top:731.4px;width:40px;height:1.4px;background:#76767c;"></div><div style="position:absolute;left:96.4px;top:724.7px;font-size:12.3px;line-height:1;color:#8e8e92;white-space:nowrap;letter-spacing:0.1px;-webkit-text-stroke:0px #8e8e92;">50</div><div style="position:absolute;left:125.1px;top:589px;width:5.6px;height:163px;background:#000;"></div><div style="position:absolute;left:159.2px;top:545.55px;width:7.4px;height:10px;background:#62140c;"></div><div style="position:absolute;left:159.2px;top:558.3px;width:7.4px;height:10px;background:#683c0e;"></div><div style="position:absolute;left:159.2px;top:571.05px;width:7.4px;height:10px;background:#683c0e;"></div><div style="position:absolute;left:159.2px;top:583.8px;width:7.4px;height:10px;background:#683c0e;"></div><div style="position:absolute;left:159.2px;top:596.55px;width:7.4px;height:10px;background:#683c0e;"></div><div style="position:absolute;left:159.2px;top:609.3px;width:7.4px;height:10px;background:#683c0e;"></div><div style="position:absolute;left:159.2px;top:622.05px;width:7.4px;height:10px;background:#683c0e;"></div><div style="position:absolute;left:159.2px;top:634.8px;width:7.4px;height:10px;background:#683c0e;"></div><div style="position:absolute;left:159.2px;top:647.55px;width:7.4px;height:10px;background:#dc3a1c;"></div><div style="position:absolute;left:159.2px;top:660.3px;width:7.4px;height:10px;background:#683c0e;"></div><div style="position:absolute;left:159.2px;top:673.05px;width:7.4px;height:10px;background:#683c0e;"></div><div style="position:absolute;left:159.2px;top:685.8px;width:7.4px;height:10px;background:#1f3414;"></div><div style="position:absolute;left:159.2px;top:698.55px;width:7.4px;height:10px;background:#1f3414;"></div><div style="position:absolute;left:159.2px;top:711.3px;width:7.4px;height:10px;background:#1f3414;"></div><div style="position:absolute;left:159.2px;top:724.05px;width:7.4px;height:10px;background:#7ef224;"></div><div style="position:absolute;left:159.2px;top:736.8px;width:7.4px;height:10px;background:#7ef224;"></div><div style="position:absolute;left:159.2px;top:749.55px;width:7.4px;height:10px;background:#7ef224;"></div><div style="position:absolute;left:159.2px;top:762.3px;width:7.4px;height:10px;background:#7ef224;"></div><div style="position:absolute;left:159.2px;top:775.05px;width:7.4px;height:10px;background:#7ef224;"></div><div style="position:absolute;left:159.2px;top:787.8px;width:7.4px;height:10px;background:#7ef224;"></div><div style="position:absolute;left:168.6px;top:545px;width:4.2px;height:65px;background:repeating-linear-gradient(#5a1414 0 1.7px,#3e171c 1.7px 3.1px);"></div><div style="position:absolute;left:174.8px;top:545px;width:4.2px;height:89px;background:repeating-linear-gradient(#5a1414 0 1.7px,#3e171c 1.7px 3.1px);"></div><svg style="position:absolute;left:112px;top:722.5px;overflow:visible" width="29" height="60" viewBox="0 0 29 60">
<path d="M-3 2 L32 2 L32 62 L-3 62Z" fill="rgba(0,0,0,.35)" filter="url(#blr)"/>
<path d="M0 0 Q14.5 3 29 0 L29 60 Q14.5 57 0 60 Z" fill="url(#fcg)"/>
<path d="M0 0 L1.5 0 L1.5 60 L0 60Z M28.5 0 L30 0 L30 60 L28.5 60Z" fill="rgba(0,0,0,.08)"/>
</svg><div style="position:absolute;left:-73px;width:400px;top:785px;text-align:center;font-size:15.5px;line-height:1;color:#eeeeee;white-space:nowrap;letter-spacing:0px;text-indent:0px;transform:scaleX(0.9);transform-origin:50% 0;-webkit-text-stroke:0.12px #eeeeee;">CH 02</div><div style="position:absolute;left:229px;top:174px;width:42px;height:21px;background:#264838;"></div><div style="position:absolute;left:243.6px;top:175px;font-size:22.5px;line-height:1;color:#f4f4f4;white-space:nowrap;letter-spacing:0px;-webkit-text-stroke:0.3px #f4f4f4;transform:scaleX(0.9);transform-origin:0 0;">G</div><div style="position:absolute;left:186px;top:197px;width:42px;height:21px;background:#264838;"></div><div style="position:absolute;left:229px;top:197px;width:42px;height:21px;background:#264838;"></div><div style="position:absolute;left:186px;top:197px;width:42px;height:21px;overflow:hidden;"><div style="position:absolute;left:5.5px;top:0.5px;font-size:22px;line-height:1;color:#f4f4f4;-webkit-text-stroke:0.3px #f4f4f4;transform:scaleX(0.95);transform-origin:0 0">EQ</div></div><div style="position:absolute;left:243px;top:198px;font-size:22px;line-height:1;color:#f4f4f4;white-space:nowrap;letter-spacing:0px;-webkit-text-stroke:0.3px #f4f4f4;transform:scaleX(0.88);transform-origin:0 0;">D</div><div style="position:absolute;left:186px;top:220.5px;width:86px;height:81.5px;background:#f4ec48;"></div><div style="position:absolute;left:29.5px;width:400px;top:250.5px;text-align:center;font-size:23px;line-height:1;color:#141414;white-space:nowrap;letter-spacing:0.35px;text-indent:0.35px;-webkit-text-stroke:0.3px #141414;">HiHat</div><svg style="position:absolute;left:184px;top:300px" width="92" height="65" viewBox="0 300 92 65"><line x1="2" y1="335.8" x2="89" y2="335.8" stroke="#6f6e76" stroke-width="2"/><path d="M1.6 335.8 L89 335.8" fill="none" stroke="#22f022" stroke-width="3.3" stroke-linejoin="round" stroke-linecap="round"/></svg><div style="position:absolute;left:189.6px;top:363.8px;width:80.6px;height:43.7px;background:#1f2530;box-sizing:border-box;border:1.7px solid #2a9ab0;"></div><div style="position:absolute;left:229px;top:363.8px;width:2px;height:44px;background:#e8eef8;"></div><div style="position:absolute;left:185px;top:413px;width:89px;height:57.6px;background:#7a4c02;"></div><div style="position:absolute;left:30.5px;width:400px;top:431.5px;text-align:center;font-size:23px;line-height:1;color:#f6e8cc;white-space:nowrap;letter-spacing:0px;text-indent:0px;transform:scaleX(0.91);transform-origin:50% 0;-webkit-text-stroke:0.3px #f6e8cc;">SOLO</div><div style="position:absolute;left:186px;top:477.8px;width:87.8px;height:57.8px;background:#5c1414;"></div><div style="position:absolute;left:31.5px;width:400px;top:496.5px;text-align:center;font-size:23px;line-height:1;color:#f6e6e6;white-space:nowrap;letter-spacing:0px;text-indent:0px;transform:scaleX(0.96);transform-origin:50% 0;-webkit-text-stroke:0.3px #f6e6e6;">MUTE</div><svg style="position:absolute;left:208.5px;top:551px" width="22" height="9" viewBox="0 0 22 9">
<path d="M0.5 4 L5 4" stroke="#f0f0f0" stroke-width="1.4"/>
<path d="M14.3 4.5 C12.5 2 11.5 1.1 10.3 1.1 C8.6 1.1 7.3 2.5 7.3 4.5 C7.3 6.5 8.6 7.9 10.3 7.9 C11.5 7.9 12.5 7 14.3 4.5 C16.1 2 17.1 1.1 18.3 1.1 C20 1.1 21.2 2.5 21.2 4.5 C21.2 6.5 20 7.9 18.3 7.9 C17.1 7.9 16.1 7 14.3 4.5Z" stroke="#f0f0f0" stroke-width="1.5" fill="none"/></svg><div style="position:absolute;left:202px;top:587.9px;width:40px;height:1.4px;background:#76767c;"></div><div style="position:absolute;left:188.4px;top:581.2px;font-size:12.3px;line-height:1;color:#8e8e92;white-space:nowrap;letter-spacing:0.1px;-webkit-text-stroke:0px #8e8e92;">10</div><div style="position:absolute;left:202px;top:608.4px;width:40px;height:1.4px;background:#76767c;"></div><div style="position:absolute;left:188.4px;top:601.7px;font-size:12.3px;line-height:1;color:#8e8e92;white-space:nowrap;letter-spacing:0.1px;-webkit-text-stroke:0px #8e8e92;">5</div><div style="position:absolute;left:202px;top:628.9px;width:40px;height:1.4px;background:#ededed;"></div><div style="position:absolute;left:188.4px;top:622.2px;font-size:12.3px;line-height:1;color:#8e8e92;white-space:nowrap;letter-spacing:0.1px;-webkit-text-stroke:0px #8e8e92;">0</div><div style="position:absolute;left:202px;top:649.4px;width:40px;height:1.4px;background:#76767c;"></div><div style="position:absolute;left:188.4px;top:642.7px;font-size:12.3px;line-height:1;color:#8e8e92;white-space:nowrap;letter-spacing:0.1px;-webkit-text-stroke:0px #8e8e92;">5</div><div style="position:absolute;left:202px;top:669.9px;width:40px;height:1.4px;background:#76767c;"></div><div style="position:absolute;left:188.4px;top:663.2px;font-size:12.3px;line-height:1;color:#8e8e92;white-space:nowrap;letter-spacing:0.1px;-webkit-text-stroke:0px #8e8e92;">10</div><div style="position:absolute;left:202px;top:690.4px;width:40px;height:1.4px;background:#76767c;"></div><div style="position:absolute;left:188.4px;top:683.7px;font-size:12.3px;line-height:1;color:#8e8e92;white-space:nowrap;letter-spacing:0.1px;-webkit-text-stroke:0px #8e8e92;">20</div><div style="position:absolute;left:202px;top:710.9px;width:40px;height:1.4px;background:#76767c;"></div><div style="position:absolute;left:188.4px;top:704.2px;font-size:12.3px;line-height:1;color:#8e8e92;white-space:nowrap;letter-spacing:0.1px;-webkit-text-stroke:0px #8e8e92;">30</div><div style="position:absolute;left:202px;top:731.4px;width:40px;height:1.4px;background:#76767c;"></div><div style="position:absolute;left:188.4px;top:724.7px;font-size:12.3px;line-height:1;color:#8e8e92;white-space:nowrap;letter-spacing:0.1px;-webkit-text-stroke:0px #8e8e92;">50</div><div style="position:absolute;left:217.1px;top:589px;width:5.6px;height:163px;background:#000;"></div><div style="position:absolute;left:251.2px;top:545.55px;width:7.4px;height:10px;background:#62140c;"></div><div style="position:absolute;left:251.2px;top:558.3px;width:7.4px;height:10px;background:#683c0e;"></div><div style="position:absolute;left:251.2px;top:571.05px;width:7.4px;height:10px;background:#683c0e;"></div><div style="position:absolute;left:251.2px;top:583.8px;width:7.4px;height:10px;background:#683c0e;"></div><div style="position:absolute;left:251.2px;top:596.55px;width:7.4px;height:10px;background:#683c0e;"></div><div style="position:absolute;left:251.2px;top:609.3px;width:7.4px;height:10px;background:#683c0e;"></div><div style="position:absolute;left:251.2px;top:622.05px;width:7.4px;height:10px;background:#683c0e;"></div><div style="position:absolute;left:251.2px;top:634.8px;width:7.4px;height:10px;background:#683c0e;"></div><div style="position:absolute;left:251.2px;top:647.55px;width:7.4px;height:10px;background:#683c0e;"></div><div style="position:absolute;left:251.2px;top:660.3px;width:7.4px;height:10px;background:#683c0e;"></div><div style="position:absolute;left:251.2px;top:673.05px;width:7.4px;height:10px;background:#dc3a1c;"></div><div style="position:absolute;left:251.2px;top:685.8px;width:7.4px;height:10px;background:#1f3414;"></div><div style="position:absolute;left:251.2px;top:698.55px;width:7.4px;height:10px;background:#1f3414;"></div><div style="position:absolute;left:251.2px;top:711.3px;width:7.4px;height:10px;background:#1f3414;"></div><div style="position:absolute;left:251.2px;top:724.05px;width:7.4px;height:10px;background:#1f3414;"></div><div style="position:absolute;left:251.2px;top:736.8px;width:7.4px;height:10px;background:#1f3414;"></div><div style="position:absolute;left:251.2px;top:749.55px;width:7.4px;height:10px;background:#1f3414;"></div><div style="position:absolute;left:251.2px;top:762.3px;width:7.4px;height:10px;background:#7ef224;"></div><div style="position:absolute;left:251.2px;top:775.05px;width:7.4px;height:10px;background:#7ef224;"></div><div style="position:absolute;left:251.2px;top:787.8px;width:7.4px;height:10px;background:#7ef224;"></div><div style="position:absolute;left:260.6px;top:545px;width:4.2px;height:65px;background:repeating-linear-gradient(#5a1414 0 1.7px,#3e171c 1.7px 3.1px);"></div><div style="position:absolute;left:266.8px;top:545px;width:4.2px;height:89px;background:repeating-linear-gradient(#5a1414 0 1.7px,#3e171c 1.7px 3.1px);"></div><svg style="position:absolute;left:204px;top:722.5px;overflow:visible" width="29" height="60" viewBox="0 0 29 60">
<path d="M-3 2 L32 2 L32 62 L-3 62Z" fill="rgba(0,0,0,.35)" filter="url(#blr)"/>
<path d="M0 0 Q14.5 3 29 0 L29 60 Q14.5 57 0 60 Z" fill="url(#fcg)"/>
<path d="M0 0 L1.5 0 L1.5 60 L0 60Z M28.5 0 L30 0 L30 60 L28.5 60Z" fill="rgba(0,0,0,.08)"/>
</svg><div style="position:absolute;left:19px;width:400px;top:785px;text-align:center;font-size:15.5px;line-height:1;color:#eeeeee;white-space:nowrap;letter-spacing:0px;text-indent:0px;transform:scaleX(0.9);transform-origin:50% 0;-webkit-text-stroke:0.12px #eeeeee;">CH 03</div><div style="position:absolute;left:321px;top:174px;width:42px;height:21px;background:#22c060;"></div><div style="position:absolute;left:335.6px;top:175px;font-size:22.5px;line-height:1;color:#f4f4f4;white-space:nowrap;letter-spacing:0px;-webkit-text-stroke:0.3px #f4f4f4;transform:scaleX(0.9);transform-origin:0 0;">G</div><div style="position:absolute;left:278px;top:197px;width:42px;height:21px;background:#22c060;"></div><div style="position:absolute;left:321px;top:197px;width:42px;height:21px;background:#22c060;"></div><div style="position:absolute;left:278px;top:197px;width:42px;height:21px;overflow:hidden;"><div style="position:absolute;left:5.5px;top:0.5px;font-size:22px;line-height:1;color:#f4f4f4;-webkit-text-stroke:0.3px #f4f4f4;transform:scaleX(0.95);transform-origin:0 0">EQ</div></div><div style="position:absolute;left:335px;top:198px;font-size:22px;line-height:1;color:#f4f4f4;white-space:nowrap;letter-spacing:0px;-webkit-text-stroke:0.3px #f4f4f4;transform:scaleX(0.88);transform-origin:0 0;">D</div><div style="position:absolute;left:278px;top:220.5px;width:86px;height:81.5px;background:#f4ec48;"></div><div style="position:absolute;left:121.5px;width:400px;top:250.5px;text-align:center;font-size:23px;line-height:1;color:#141414;white-space:nowrap;letter-spacing:0.35px;text-indent:0.35px;-webkit-text-stroke:0.3px #141414;">Tom 1</div><svg style="position:absolute;left:276px;top:300px" width="92" height="65" viewBox="0 300 92 65"><line x1="2" y1="335.8" x2="89" y2="335.8" stroke="#6f6e76" stroke-width="2"/><path d="M1.6 361.4 L30 361.4 L33.3 335.5 C37 333 44 328 47 322 L50 309.5 C52 318 54 330 63 333 C70 333 72 325 74.8 312 C77 322 80 333 89 335" fill="none" stroke="#22f022" stroke-width="3.3" stroke-linejoin="round" stroke-linecap="round"/></svg><div style="position:absolute;left:281.6px;top:363.8px;width:80.6px;height:43.7px;background:#1f2530;box-sizing:border-box;border:1.7px solid #2a9ab0;"></div><div style="position:absolute;left:321px;top:363.8px;width:2px;height:44px;background:#e8eef8;"></div><div style="position:absolute;left:277px;top:413px;width:89px;height:57.6px;background:#7a4c02;"></div><div style="position:absolute;left:122.5px;width:400px;top:431.5px;text-align:center;font-size:23px;line-height:1;color:#f6e8cc;white-space:nowrap;letter-spacing:0px;text-indent:0px;transform:scaleX(0.91);transform-origin:50% 0;-webkit-text-stroke:0.3px #f6e8cc;">SOLO</div><div style="position:absolute;left:278px;top:477.8px;width:87.8px;height:57.8px;background:#5c1414;"></div><div style="position:absolute;left:123.5px;width:400px;top:496.5px;text-align:center;font-size:23px;line-height:1;color:#f6e6e6;white-space:nowrap;letter-spacing:0px;text-indent:0px;transform:scaleX(0.96);transform-origin:50% 0;-webkit-text-stroke:0.3px #f6e6e6;">MUTE</div><div style="position:absolute;left:111.5px;width:400px;top:546px;text-align:center;font-size:15.5px;line-height:1;color:#f0f0f0;white-space:nowrap;letter-spacing:0.2px;text-indent:0.2px;-webkit-text-stroke:0.12px #f0f0f0;">-28.8</div><div style="position:absolute;left:294px;top:587.9px;width:40px;height:1.4px;background:#76767c;"></div><div style="position:absolute;left:280.4px;top:581.2px;font-size:12.3px;line-height:1;color:#8e8e92;white-space:nowrap;letter-spacing:0.1px;-webkit-text-stroke:0px #8e8e92;">10</div><div style="position:absolute;left:294px;top:608.4px;width:40px;height:1.4px;background:#76767c;"></div><div style="position:absolute;left:280.4px;top:601.7px;font-size:12.3px;line-height:1;color:#8e8e92;white-space:nowrap;letter-spacing:0.1px;-webkit-text-stroke:0px #8e8e92;">5</div><div style="position:absolute;left:294px;top:628.9px;width:40px;height:1.4px;background:#ededed;"></div><div style="position:absolute;left:280.4px;top:622.2px;font-size:12.3px;line-height:1;color:#8e8e92;white-space:nowrap;letter-spacing:0.1px;-webkit-text-stroke:0px #8e8e92;">0</div><div style="position:absolute;left:294px;top:649.4px;width:40px;height:1.4px;background:#76767c;"></div><div style="position:absolute;left:280.4px;top:642.7px;font-size:12.3px;line-height:1;color:#8e8e92;white-space:nowrap;letter-spacing:0.1px;-webkit-text-stroke:0px #8e8e92;">5</div><div style="position:absolute;left:294px;top:669.9px;width:40px;height:1.4px;background:#76767c;"></div><div style="position:absolute;left:280.4px;top:663.2px;font-size:12.3px;line-height:1;color:#8e8e92;white-space:nowrap;letter-spacing:0.1px;-webkit-text-stroke:0px #8e8e92;">10</div><div style="position:absolute;left:294px;top:690.4px;width:40px;height:1.4px;background:#76767c;"></div><div style="position:absolute;left:280.4px;top:683.7px;font-size:12.3px;line-height:1;color:#8e8e92;white-space:nowrap;letter-spacing:0.1px;-webkit-text-stroke:0px #8e8e92;">20</div><div style="position:absolute;left:294px;top:710.9px;width:40px;height:1.4px;background:#76767c;"></div><div style="position:absolute;left:280.4px;top:704.2px;font-size:12.3px;line-height:1;color:#8e8e92;white-space:nowrap;letter-spacing:0.1px;-webkit-text-stroke:0px #8e8e92;">30</div><div style="position:absolute;left:294px;top:731.4px;width:40px;height:1.4px;background:#76767c;"></div><div style="position:absolute;left:280.4px;top:724.7px;font-size:12.3px;line-height:1;color:#8e8e92;white-space:nowrap;letter-spacing:0.1px;-webkit-text-stroke:0px #8e8e92;">50</div><div style="position:absolute;left:309.1px;top:589px;width:5.6px;height:163px;background:#000;"></div><div style="position:absolute;left:343.2px;top:545.55px;width:7.4px;height:10px;background:#62140c;"></div><div style="position:absolute;left:343.2px;top:558.3px;width:7.4px;height:10px;background:#683c0e;"></div><div style="position:absolute;left:343.2px;top:571.05px;width:7.4px;height:10px;background:#683c0e;"></div><div style="position:absolute;left:343.2px;top:583.8px;width:7.4px;height:10px;background:#683c0e;"></div><div style="position:absolute;left:343.2px;top:596.55px;width:7.4px;height:10px;background:#683c0e;"></div><div style="position:absolute;left:343.2px;top:609.3px;width:7.4px;height:10px;background:#683c0e;"></div><div style="position:absolute;left:343.2px;top:622.05px;width:7.4px;height:10px;background:#dc3a1c;"></div><div style="position:absolute;left:343.2px;top:634.8px;width:7.4px;height:10px;background:#683c0e;"></div><div style="position:absolute;left:343.2px;top:647.55px;width:7.4px;height:10px;background:#683c0e;"></div><div style="position:absolute;left:343.2px;top:660.3px;width:7.4px;height:10px;background:#683c0e;"></div><div style="position:absolute;left:343.2px;top:673.05px;width:7.4px;height:10px;background:#683c0e;"></div><div style="position:absolute;left:343.2px;top:685.8px;width:7.4px;height:10px;background:#1f3414;"></div><div style="position:absolute;left:343.2px;top:698.55px;width:7.4px;height:10px;background:#1f3414;"></div><div style="position:absolute;left:343.2px;top:711.3px;width:7.4px;height:10px;background:#1f3414;"></div><div style="position:absolute;left:343.2px;top:724.05px;width:7.4px;height:10px;background:#1f3414;"></div><div style="position:absolute;left:343.2px;top:736.8px;width:7.4px;height:10px;background:#1f3414;"></div><div style="position:absolute;left:343.2px;top:749.55px;width:7.4px;height:10px;background:#1f3414;"></div><div style="position:absolute;left:343.2px;top:762.3px;width:7.4px;height:10px;background:#1f3414;"></div><div style="position:absolute;left:343.2px;top:775.05px;width:7.4px;height:10px;background:#1f3414;"></div><div style="position:absolute;left:343.2px;top:787.8px;width:7.4px;height:10px;background:#1f3414;"></div><div style="position:absolute;left:352.6px;top:545px;width:4.2px;height:65px;background:repeating-linear-gradient(#5a1414 0 1.7px,#3e171c 1.7px 3.1px);"></div><div style="position:absolute;left:358.8px;top:545px;width:4.2px;height:89px;background:repeating-linear-gradient(#5a1414 0 1.7px,#3e171c 1.7px 3.1px);"></div><div style="position:absolute;left:353.3px;top:545.0px;width:3.4px;height:5.4px;background:#ec2e22;"></div><div style="position:absolute;left:353.3px;top:551.6px;width:3.4px;height:5.4px;background:#ec2e22;"></div><div style="position:absolute;left:353.3px;top:558.2px;width:3.4px;height:5.4px;background:#ec2e22;"></div><svg style="position:absolute;left:296px;top:679px;overflow:visible" width="29" height="60" viewBox="0 0 29 60">
<path d="M-3 2 L32 2 L32 62 L-3 62Z" fill="rgba(0,0,0,.35)" filter="url(#blr)"/>
<path d="M0 0 Q14.5 3 29 0 L29 60 Q14.5 57 0 60 Z" fill="url(#fcg)"/>
<path d="M0 0 L1.5 0 L1.5 60 L0 60Z M28.5 0 L30 0 L30 60 L28.5 60Z" fill="rgba(0,0,0,.08)"/>
</svg><div style="position:absolute;left:111px;width:400px;top:785px;text-align:center;font-size:15.5px;line-height:1;color:#eeeeee;white-space:nowrap;letter-spacing:0px;text-indent:0px;transform:scaleX(0.9);transform-origin:50% 0;-webkit-text-stroke:0.12px #eeeeee;">CH 04</div><div style="position:absolute;left:413px;top:174px;width:42px;height:21px;background:#264838;"></div><div style="position:absolute;left:427.6px;top:175px;font-size:22.5px;line-height:1;color:#f4f4f4;white-space:nowrap;letter-spacing:0px;-webkit-text-stroke:0.3px #f4f4f4;transform:scaleX(0.9);transform-origin:0 0;">G</div><div style="position:absolute;left:370px;top:197px;width:42px;height:21px;background:#264838;"></div><div style="position:absolute;left:413px;top:197px;width:42px;height:21px;background:#22c060;"></div><div style="position:absolute;left:370px;top:197px;width:42px;height:21px;overflow:hidden;"><div style="position:absolute;left:5.5px;top:0.5px;font-size:22px;line-height:1;color:#f4f4f4;-webkit-text-stroke:0.3px #f4f4f4;transform:scaleX(0.95);transform-origin:0 0">EQ</div></div><div style="position:absolute;left:427px;top:198px;font-size:22px;line-height:1;color:#f4f4f4;white-space:nowrap;letter-spacing:0px;-webkit-text-stroke:0.3px #f4f4f4;transform:scaleX(0.88);transform-origin:0 0;">D</div><div style="position:absolute;left:370px;top:220.5px;width:86px;height:81.5px;background:#f4ec48;"></div><div style="position:absolute;left:213.5px;width:400px;top:250.5px;text-align:center;font-size:23px;line-height:1;color:#141414;white-space:nowrap;letter-spacing:0.35px;text-indent:0.35px;-webkit-text-stroke:0.3px #141414;">Tom 2</div><svg style="position:absolute;left:368px;top:300px" width="92" height="65" viewBox="0 300 92 65"><line x1="2" y1="335.8" x2="89" y2="335.8" stroke="#6f6e76" stroke-width="2"/><path d="M1.6 335.8 L89 335.8" fill="none" stroke="#22f022" stroke-width="3.3" stroke-linejoin="round" stroke-linecap="round"/></svg><div style="position:absolute;left:373.6px;top:363.8px;width:80.6px;height:43.7px;background:#1f2530;box-sizing:border-box;border:1.7px solid #2a9ab0;"></div><div style="position:absolute;left:376px;top:371.5px;width:37px;height:27.7px;background:#5f80b8;"></div><div style="position:absolute;left:413px;top:363.8px;width:2px;height:44px;background:#e8eef8;"></div><div style="position:absolute;left:369px;top:413px;width:89px;height:57.6px;background:#7a4c02;"></div><div style="position:absolute;left:214.5px;width:400px;top:431.5px;text-align:center;font-size:23px;line-height:1;color:#f6e8cc;white-space:nowrap;letter-spacing:0px;text-indent:0px;transform:scaleX(0.91);transform-origin:50% 0;-webkit-text-stroke:0.3px #f6e8cc;">SOLO</div><div style="position:absolute;left:370px;top:477.8px;width:87.8px;height:57.8px;background:#5c1414;"></div><div style="position:absolute;left:215.5px;width:400px;top:496.5px;text-align:center;font-size:23px;line-height:1;color:#f6e6e6;white-space:nowrap;letter-spacing:0px;text-indent:0px;transform:scaleX(0.96);transform-origin:50% 0;-webkit-text-stroke:0.3px #f6e6e6;">MUTE</div><svg style="position:absolute;left:392.5px;top:551px" width="22" height="9" viewBox="0 0 22 9">
<path d="M0.5 4 L5 4" stroke="#f0f0f0" stroke-width="1.4"/>
<path d="M14.3 4.5 C12.5 2 11.5 1.1 10.3 1.1 C8.6 1.1 7.3 2.5 7.3 4.5 C7.3 6.5 8.6 7.9 10.3 7.9 C11.5 7.9 12.5 7 14.3 4.5 C16.1 2 17.1 1.1 18.3 1.1 C20 1.1 21.2 2.5 21.2 4.5 C21.2 6.5 20 7.9 18.3 7.9 C17.1 7.9 16.1 7 14.3 4.5Z" stroke="#f0f0f0" stroke-width="1.5" fill="none"/></svg><div style="position:absolute;left:386px;top:587.9px;width:40px;height:1.4px;background:#76767c;"></div><div style="position:absolute;left:372.4px;top:581.2px;font-size:12.3px;line-height:1;color:#8e8e92;white-space:nowrap;letter-spacing:0.1px;-webkit-text-stroke:0px #8e8e92;">10</div><div style="position:absolute;left:386px;top:608.4px;width:40px;height:1.4px;background:#76767c;"></div><div style="position:absolute;left:372.4px;top:601.7px;font-size:12.3px;line-height:1;color:#8e8e92;white-space:nowrap;letter-spacing:0.1px;-webkit-text-stroke:0px #8e8e92;">5</div><div style="position:absolute;left:386px;top:628.9px;width:40px;height:1.4px;background:#ededed;"></div><div style="position:absolute;left:372.4px;top:622.2px;font-size:12.3px;line-height:1;color:#8e8e92;white-space:nowrap;letter-spacing:0.1px;-webkit-text-stroke:0px #8e8e92;">0</div><div style="position:absolute;left:386px;top:649.4px;width:40px;height:1.4px;background:#76767c;"></div><div style="position:absolute;left:372.4px;top:642.7px;font-size:12.3px;line-height:1;color:#8e8e92;white-space:nowrap;letter-spacing:0.1px;-webkit-text-stroke:0px #8e8e92;">5</div><div style="position:absolute;left:386px;top:669.9px;width:40px;height:1.4px;background:#76767c;"></div><div style="position:absolute;left:372.4px;top:663.2px;font-size:12.3px;line-height:1;color:#8e8e92;white-space:nowrap;letter-spacing:0.1px;-webkit-text-stroke:0px #8e8e92;">10</div><div style="position:absolute;left:386px;top:690.4px;width:40px;height:1.4px;background:#76767c;"></div><div style="position:absolute;left:372.4px;top:683.7px;font-size:12.3px;line-height:1;color:#8e8e92;white-space:nowrap;letter-spacing:0.1px;-webkit-text-stroke:0px #8e8e92;">20</div><div style="position:absolute;left:386px;top:710.9px;width:40px;height:1.4px;background:#76767c;"></div><div style="position:absolute;left:372.4px;top:704.2px;font-size:12.3px;line-height:1;color:#8e8e92;white-space:nowrap;letter-spacing:0.1px;-webkit-text-stroke:0px #8e8e92;">30</div><div style="position:absolute;left:386px;top:731.4px;width:40px;height:1.4px;background:#76767c;"></div><div style="position:absolute;left:372.4px;top:724.7px;font-size:12.3px;line-height:1;color:#8e8e92;white-space:nowrap;letter-spacing:0.1px;-webkit-text-stroke:0px #8e8e92;">50</div><div style="position:absolute;left:401.1px;top:589px;width:5.6px;height:163px;background:#000;"></div><div style="position:absolute;left:435.2px;top:545.55px;width:7.4px;height:10px;background:#62140c;"></div><div style="position:absolute;left:435.2px;top:558.3px;width:7.4px;height:10px;background:#683c0e;"></div><div style="position:absolute;left:435.2px;top:571.05px;width:7.4px;height:10px;background:#683c0e;"></div><div style="position:absolute;left:435.2px;top:583.8px;width:7.4px;height:10px;background:#683c0e;"></div><div style="position:absolute;left:435.2px;top:596.55px;width:7.4px;height:10px;background:#683c0e;"></div><div style="position:absolute;left:435.2px;top:609.3px;width:7.4px;height:10px;background:#683c0e;"></div><div style="position:absolute;left:435.2px;top:622.05px;width:7.4px;height:10px;background:#683c0e;"></div><div style="position:absolute;left:435.2px;top:634.8px;width:7.4px;height:10px;background:#683c0e;"></div><div style="position:absolute;left:435.2px;top:647.55px;width:7.4px;height:10px;background:#683c0e;"></div><div style="position:absolute;left:435.2px;top:660.3px;width:7.4px;height:10px;background:#683c0e;"></div><div style="position:absolute;left:435.2px;top:673.05px;width:7.4px;height:10px;background:#dc3a1c;"></div><div style="position:absolute;left:435.2px;top:685.8px;width:7.4px;height:10px;background:#1f3414;"></div><div style="position:absolute;left:435.2px;top:698.55px;width:7.4px;height:10px;background:#1f3414;"></div><div style="position:absolute;left:435.2px;top:711.3px;width:7.4px;height:10px;background:#1f3414;"></div><div style="position:absolute;left:435.2px;top:724.05px;width:7.4px;height:10px;background:#1f3414;"></div><div style="position:absolute;left:435.2px;top:736.8px;width:7.4px;height:10px;background:#1f3414;"></div><div style="position:absolute;left:435.2px;top:749.55px;width:7.4px;height:10px;background:#1f3414;"></div><div style="position:absolute;left:435.2px;top:762.3px;width:7.4px;height:10px;background:#1f3414;"></div><div style="position:absolute;left:435.2px;top:775.05px;width:7.4px;height:10px;background:#1f3414;"></div><div style="position:absolute;left:435.2px;top:787.8px;width:7.4px;height:10px;background:#1f3414;"></div><div style="position:absolute;left:444.6px;top:545px;width:4.2px;height:65px;background:repeating-linear-gradient(#5a1414 0 1.7px,#3e171c 1.7px 3.1px);"></div><div style="position:absolute;left:450.8px;top:545px;width:4.2px;height:89px;background:repeating-linear-gradient(#5a1414 0 1.7px,#3e171c 1.7px 3.1px);"></div><svg style="position:absolute;left:388px;top:722.5px;overflow:visible" width="29" height="60" viewBox="0 0 29 60">
<path d="M-3 2 L32 2 L32 62 L-3 62Z" fill="rgba(0,0,0,.35)" filter="url(#blr)"/>
<path d="M0 0 Q14.5 3 29 0 L29 60 Q14.5 57 0 60 Z" fill="url(#fcg)"/>
<path d="M0 0 L1.5 0 L1.5 60 L0 60Z M28.5 0 L30 0 L30 60 L28.5 60Z" fill="rgba(0,0,0,.08)"/>
</svg><div style="position:absolute;left:203px;width:400px;top:785px;text-align:center;font-size:15.5px;line-height:1;color:#eeeeee;white-space:nowrap;letter-spacing:0px;text-indent:0px;transform:scaleX(0.9);transform-origin:50% 0;-webkit-text-stroke:0.12px #eeeeee;">CH 05</div><div style="position:absolute;left:505px;top:174px;width:42px;height:21px;background:#264838;"></div><div style="position:absolute;left:519.6px;top:175px;font-size:22.5px;line-height:1;color:#f4f4f4;white-space:nowrap;letter-spacing:0px;-webkit-text-stroke:0.3px #f4f4f4;transform:scaleX(0.9);transform-origin:0 0;">G</div><div style="position:absolute;left:462px;top:197px;width:42px;height:21px;background:#264838;"></div><div style="position:absolute;left:505px;top:197px;width:42px;height:21px;background:#264838;"></div><div style="position:absolute;left:462px;top:197px;width:42px;height:21px;overflow:hidden;"><div style="position:absolute;left:5.5px;top:0.5px;font-size:22px;line-height:1;color:#f4f4f4;-webkit-text-stroke:0.3px #f4f4f4;transform:scaleX(0.95);transform-origin:0 0">EQ</div></div><div style="position:absolute;left:519px;top:198px;font-size:22px;line-height:1;color:#f4f4f4;white-space:nowrap;letter-spacing:0px;-webkit-text-stroke:0.3px #f4f4f4;transform:scaleX(0.88);transform-origin:0 0;">D</div><div style="position:absolute;left:462px;top:220.5px;width:86px;height:81.5px;background:#f4ec48;"></div><div style="position:absolute;left:305.5px;width:400px;top:250.5px;text-align:center;font-size:23px;line-height:1;color:#141414;white-space:nowrap;letter-spacing:0.35px;text-indent:0.35px;-webkit-text-stroke:0.3px #141414;">Tom 3</div><svg style="position:absolute;left:460px;top:300px" width="92" height="65" viewBox="0 300 92 65"><line x1="2" y1="335.8" x2="89" y2="335.8" stroke="#6f6e76" stroke-width="2"/><path d="M1.6 335.8 L89 335.8" fill="none" stroke="#22f022" stroke-width="3.3" stroke-linejoin="round" stroke-linecap="round"/></svg><div style="position:absolute;left:465.6px;top:363.8px;width:80.6px;height:43.7px;background:#1f2530;box-sizing:border-box;border:1.7px solid #2a9ab0;"></div><div style="position:absolute;left:505px;top:363.8px;width:2px;height:44px;background:#e8eef8;"></div><div style="position:absolute;left:461px;top:413px;width:89px;height:57.6px;background:#7a4c02;"></div><div style="position:absolute;left:306.5px;width:400px;top:431.5px;text-align:center;font-size:23px;line-height:1;color:#f6e8cc;white-space:nowrap;letter-spacing:0px;text-indent:0px;transform:scaleX(0.91);transform-origin:50% 0;-webkit-text-stroke:0.3px #f6e8cc;">SOLO</div><div style="position:absolute;left:462px;top:477.8px;width:87.8px;height:57.8px;background:#5c1414;"></div><div style="position:absolute;left:307.5px;width:400px;top:496.5px;text-align:center;font-size:23px;line-height:1;color:#f6e6e6;white-space:nowrap;letter-spacing:0px;text-indent:0px;transform:scaleX(0.96);transform-origin:50% 0;-webkit-text-stroke:0.3px #f6e6e6;">MUTE</div><svg style="position:absolute;left:484.5px;top:551px" width="22" height="9" viewBox="0 0 22 9">
<path d="M0.5 4 L5 4" stroke="#f0f0f0" stroke-width="1.4"/>
<path d="M14.3 4.5 C12.5 2 11.5 1.1 10.3 1.1 C8.6 1.1 7.3 2.5 7.3 4.5 C7.3 6.5 8.6 7.9 10.3 7.9 C11.5 7.9 12.5 7 14.3 4.5 C16.1 2 17.1 1.1 18.3 1.1 C20 1.1 21.2 2.5 21.2 4.5 C21.2 6.5 20 7.9 18.3 7.9 C17.1 7.9 16.1 7 14.3 4.5Z" stroke="#f0f0f0" stroke-width="1.5" fill="none"/></svg><div style="position:absolute;left:478px;top:587.9px;width:40px;height:1.4px;background:#76767c;"></div><div style="position:absolute;left:464.4px;top:581.2px;font-size:12.3px;line-height:1;color:#8e8e92;white-space:nowrap;letter-spacing:0.1px;-webkit-text-stroke:0px #8e8e92;">10</div><div style="position:absolute;left:478px;top:608.4px;width:40px;height:1.4px;background:#76767c;"></div><div style="position:absolute;left:464.4px;top:601.7px;font-size:12.3px;line-height:1;color:#8e8e92;white-space:nowrap;letter-spacing:0.1px;-webkit-text-stroke:0px #8e8e92;">5</div><div style="position:absolute;left:478px;top:628.9px;width:40px;height:1.4px;background:#ededed;"></div><div style="position:absolute;left:464.4px;top:622.2px;font-size:12.3px;line-height:1;color:#8e8e92;white-space:nowrap;letter-spacing:0.1px;-webkit-text-stroke:0px #8e8e92;">0</div><div style="position:absolute;left:478px;top:649.4px;width:40px;height:1.4px;background:#76767c;"></div><div style="position:absolute;left:464.4px;top:642.7px;font-size:12.3px;line-height:1;color:#8e8e92;white-space:nowrap;letter-spacing:0.1px;-webkit-text-stroke:0px #8e8e92;">5</div><div style="position:absolute;left:478px;top:669.9px;width:40px;height:1.4px;background:#76767c;"></div><div style="position:absolute;left:464.4px;top:663.2px;font-size:12.3px;line-height:1;color:#8e8e92;white-space:nowrap;letter-spacing:0.1px;-webkit-text-stroke:0px #8e8e92;">10</div><div style="position:absolute;left:478px;top:690.4px;width:40px;height:1.4px;background:#76767c;"></div><div style="position:absolute;left:464.4px;top:683.7px;font-size:12.3px;line-height:1;color:#8e8e92;white-space:nowrap;letter-spacing:0.1px;-webkit-text-stroke:0px #8e8e92;">20</div><div style="position:absolute;left:478px;top:710.9px;width:40px;height:1.4px;background:#76767c;"></div><div style="position:absolute;left:464.4px;top:704.2px;font-size:12.3px;line-height:1;color:#8e8e92;white-space:nowrap;letter-spacing:0.1px;-webkit-text-stroke:0px #8e8e92;">30</div><div style="position:absolute;left:478px;top:731.4px;width:40px;height:1.4px;background:#76767c;"></div><div style="position:absolute;left:464.4px;top:724.7px;font-size:12.3px;line-height:1;color:#8e8e92;white-space:nowrap;letter-spacing:0.1px;-webkit-text-stroke:0px #8e8e92;">50</div><div style="position:absolute;left:493.1px;top:589px;width:5.6px;height:163px;background:#000;"></div><div style="position:absolute;left:527.2px;top:545.55px;width:7.4px;height:10px;background:#62140c;"></div><div style="position:absolute;left:527.2px;top:558.3px;width:7.4px;height:10px;background:#683c0e;"></div><div style="position:absolute;left:527.2px;top:571.05px;width:7.4px;height:10px;background:#683c0e;"></div><div style="position:absolute;left:527.2px;top:583.8px;width:7.4px;height:10px;background:#683c0e;"></div><div style="position:absolute;left:527.2px;top:596.55px;width:7.4px;height:10px;background:#683c0e;"></div><div style="position:absolute;left:527.2px;top:609.3px;width:7.4px;height:10px;background:#683c0e;"></div><div style="position:absolute;left:527.2px;top:622.05px;width:7.4px;height:10px;background:#683c0e;"></div><div style="position:absolute;left:527.2px;top:634.8px;width:7.4px;height:10px;background:#683c0e;"></div><div style="position:absolute;left:527.2px;top:647.55px;width:7.4px;height:10px;background:#683c0e;"></div><div style="position:absolute;left:527.2px;top:660.3px;width:7.4px;height:10px;background:#683c0e;"></div><div style="position:absolute;left:527.2px;top:673.05px;width:7.4px;height:10px;background:#683c0e;"></div><div style="position:absolute;left:527.2px;top:685.8px;width:7.4px;height:10px;background:#dc3a1c;"></div><div style="position:absolute;left:527.2px;top:698.55px;width:7.4px;height:10px;background:#1f3414;"></div><div style="position:absolute;left:527.2px;top:711.3px;width:7.4px;height:10px;background:#1f3414;"></div><div style="position:absolute;left:527.2px;top:724.05px;width:7.4px;height:10px;background:#1f3414;"></div><div style="position:absolute;left:527.2px;top:736.8px;width:7.4px;height:10px;background:#1f3414;"></div><div style="position:absolute;left:527.2px;top:749.55px;width:7.4px;height:10px;background:#7ef224;"></div><div style="position:absolute;left:527.2px;top:762.3px;width:7.4px;height:10px;background:#7ef224;"></div><div style="position:absolute;left:527.2px;top:775.05px;width:7.4px;height:10px;background:#7ef224;"></div><div style="position:absolute;left:527.2px;top:787.8px;width:7.4px;height:10px;background:#7ef224;"></div><div style="position:absolute;left:536.6px;top:545px;width:4.2px;height:65px;background:repeating-linear-gradient(#5a1414 0 1.7px,#3e171c 1.7px 3.1px);"></div><div style="position:absolute;left:542.8px;top:545px;width:4.2px;height:89px;background:repeating-linear-gradient(#5a1414 0 1.7px,#3e171c 1.7px 3.1px);"></div><svg style="position:absolute;left:480px;top:722.5px;overflow:visible" width="29" height="60" viewBox="0 0 29 60">
<path d="M-3 2 L32 2 L32 62 L-3 62Z" fill="rgba(0,0,0,.35)" filter="url(#blr)"/>
<path d="M0 0 Q14.5 3 29 0 L29 60 Q14.5 57 0 60 Z" fill="url(#fcg)"/>
<path d="M0 0 L1.5 0 L1.5 60 L0 60Z M28.5 0 L30 0 L30 60 L28.5 60Z" fill="rgba(0,0,0,.08)"/>
</svg><div style="position:absolute;left:295px;width:400px;top:785px;text-align:center;font-size:15.5px;line-height:1;color:#eeeeee;white-space:nowrap;letter-spacing:0px;text-indent:0px;transform:scaleX(0.9);transform-origin:50% 0;-webkit-text-stroke:0.12px #eeeeee;">CH 06</div><div style="position:absolute;left:597px;top:174px;width:42px;height:21px;background:#264838;"></div><div style="position:absolute;left:611.6px;top:175px;font-size:22.5px;line-height:1;color:#f4f4f4;white-space:nowrap;letter-spacing:0px;-webkit-text-stroke:0.3px #f4f4f4;transform:scaleX(0.9);transform-origin:0 0;">G</div><div style="position:absolute;left:554px;top:197px;width:42px;height:21px;background:#22c060;"></div><div style="position:absolute;left:597px;top:197px;width:42px;height:21px;background:#22c060;"></div><div style="position:absolute;left:554px;top:197px;width:42px;height:21px;overflow:hidden;"><div style="position:absolute;left:5.5px;top:0.5px;font-size:22px;line-height:1;color:#f4f4f4;-webkit-text-stroke:0.3px #f4f4f4;transform:scaleX(0.95);transform-origin:0 0">EQ</div></div><div style="position:absolute;left:611px;top:198px;font-size:22px;line-height:1;color:#f4f4f4;white-space:nowrap;letter-spacing:0px;-webkit-text-stroke:0.3px #f4f4f4;transform:scaleX(0.88);transform-origin:0 0;">D</div><div style="position:absolute;left:554px;top:220.5px;width:86px;height:81.5px;background:#f4ec48;"></div><div style="position:absolute;left:397.5px;width:400px;top:250.5px;text-align:center;font-size:23px;line-height:1;color:#141414;white-space:nowrap;letter-spacing:0.35px;text-indent:0.35px;-webkit-text-stroke:0.3px #141414;">Tom 3</div><svg style="position:absolute;left:552px;top:300px" width="92" height="65" viewBox="0 300 92 65"><line x1="2" y1="335.8" x2="89" y2="335.8" stroke="#6f6e76" stroke-width="2"/><path d="M1.6 335.8 L18 336.4 C22 338 24 343 26 346.5 C28 342 30 339 33 337 C38 333 44 327 48 324.8 C52 325 56 331 64 334.6 C68 335.6 72 335.8 89 335.8" fill="none" stroke="#22f022" stroke-width="3.3" stroke-linejoin="round" stroke-linecap="round"/></svg><div style="position:absolute;left:557.6px;top:363.8px;width:80.6px;height:43.7px;background:#1f2530;box-sizing:border-box;border:1.7px solid #2a9ab0;"></div><div style="position:absolute;left:597px;top:363.8px;width:2px;height:44px;background:#e8eef8;"></div><div style="position:absolute;left:553px;top:413px;width:89px;height:57.6px;background:#7a4c02;"></div><div style="position:absolute;left:398.5px;width:400px;top:431.5px;text-align:center;font-size:23px;line-height:1;color:#f6e8cc;white-space:nowrap;letter-spacing:0px;text-indent:0px;transform:scaleX(0.91);transform-origin:50% 0;-webkit-text-stroke:0.3px #f6e8cc;">SOLO</div><div style="position:absolute;left:554px;top:477.8px;width:87.8px;height:57.8px;background:#5c1414;"></div><div style="position:absolute;left:399.5px;width:400px;top:496.5px;text-align:center;font-size:23px;line-height:1;color:#f6e6e6;white-space:nowrap;letter-spacing:0px;text-indent:0px;transform:scaleX(0.96);transform-origin:50% 0;-webkit-text-stroke:0.3px #f6e6e6;">MUTE</div><svg style="position:absolute;left:576.5px;top:551px" width="22" height="9" viewBox="0 0 22 9">
<path d="M0.5 4 L5 4" stroke="#f0f0f0" stroke-width="1.4"/>
<path d="M14.3 4.5 C12.5 2 11.5 1.1 10.3 1.1 C8.6 1.1 7.3 2.5 7.3 4.5 C7.3 6.5 8.6 7.9 10.3 7.9 C11.5 7.9 12.5 7 14.3 4.5 C16.1 2 17.1 1.1 18.3 1.1 C20 1.1 21.2 2.5 21.2 4.5 C21.2 6.5 20 7.9 18.3 7.9 C17.1 7.9 16.1 7 14.3 4.5Z" stroke="#f0f0f0" stroke-width="1.5" fill="none"/></svg><div style="position:absolute;left:570px;top:587.9px;width:40px;height:1.4px;background:#76767c;"></div><div style="position:absolute;left:556.4px;top:581.2px;font-size:12.3px;line-height:1;color:#8e8e92;white-space:nowrap;letter-spacing:0.1px;-webkit-text-stroke:0px #8e8e92;">10</div><div style="position:absolute;left:570px;top:608.4px;width:40px;height:1.4px;background:#76767c;"></div><div style="position:absolute;left:556.4px;top:601.7px;font-size:12.3px;line-height:1;color:#8e8e92;white-space:nowrap;letter-spacing:0.1px;-webkit-text-stroke:0px #8e8e92;">5</div><div style="position:absolute;left:570px;top:628.9px;width:40px;height:1.4px;background:#ededed;"></div><div style="position:absolute;left:556.4px;top:622.2px;font-size:12.3px;line-height:1;color:#8e8e92;white-space:nowrap;letter-spacing:0.1px;-webkit-text-stroke:0px #8e8e92;">0</div><div style="position:absolute;left:570px;top:649.4px;width:40px;height:1.4px;background:#76767c;"></div><div style="position:absolute;left:556.4px;top:642.7px;font-size:12.3px;line-height:1;color:#8e8e92;white-space:nowrap;letter-spacing:0.1px;-webkit-text-stroke:0px #8e8e92;">5</div><div style="position:absolute;left:570px;top:669.9px;width:40px;height:1.4px;background:#76767c;"></div><div style="position:absolute;left:556.4px;top:663.2px;font-size:12.3px;line-height:1;color:#8e8e92;white-space:nowrap;letter-spacing:0.1px;-webkit-text-stroke:0px #8e8e92;">10</div><div style="position:absolute;left:570px;top:690.4px;width:40px;height:1.4px;background:#76767c;"></div><div style="position:absolute;left:556.4px;top:683.7px;font-size:12.3px;line-height:1;color:#8e8e92;white-space:nowrap;letter-spacing:0.1px;-webkit-text-stroke:0px #8e8e92;">20</div><div style="position:absolute;left:570px;top:710.9px;width:40px;height:1.4px;background:#76767c;"></div><div style="position:absolute;left:556.4px;top:704.2px;font-size:12.3px;line-height:1;color:#8e8e92;white-space:nowrap;letter-spacing:0.1px;-webkit-text-stroke:0px #8e8e92;">30</div><div style="position:absolute;left:570px;top:731.4px;width:40px;height:1.4px;background:#76767c;"></div><div style="position:absolute;left:556.4px;top:724.7px;font-size:12.3px;line-height:1;color:#8e8e92;white-space:nowrap;letter-spacing:0.1px;-webkit-text-stroke:0px #8e8e92;">50</div><div style="position:absolute;left:585.1px;top:589px;width:5.6px;height:163px;background:#000;"></div><div style="position:absolute;left:619.2px;top:545.55px;width:7.4px;height:10px;background:#62140c;"></div><div style="position:absolute;left:619.2px;top:558.3px;width:7.4px;height:10px;background:#683c0e;"></div><div style="position:absolute;left:619.2px;top:571.05px;width:7.4px;height:10px;background:#683c0e;"></div><div style="position:absolute;left:619.2px;top:583.8px;width:7.4px;height:10px;background:#683c0e;"></div><div style="position:absolute;left:619.2px;top:596.55px;width:7.4px;height:10px;background:#683c0e;"></div><div style="position:absolute;left:619.2px;top:609.3px;width:7.4px;height:10px;background:#dc3a1c;"></div><div style="position:absolute;left:619.2px;top:622.05px;width:7.4px;height:10px;background:#683c0e;"></div><div style="position:absolute;left:619.2px;top:634.8px;width:7.4px;height:10px;background:#683c0e;"></div><div style="position:absolute;left:619.2px;top:647.55px;width:7.4px;height:10px;background:#f4c61e;"></div><div style="position:absolute;left:619.2px;top:660.3px;width:7.4px;height:10px;background:#f4c61e;"></div><div style="position:absolute;left:619.2px;top:673.05px;width:7.4px;height:10px;background:#f4c61e;"></div><div style="position:absolute;left:619.2px;top:685.8px;width:7.4px;height:10px;background:#7ef224;"></div><div style="position:absolute;left:619.2px;top:698.55px;width:7.4px;height:10px;background:#7ef224;"></div><div style="position:absolute;left:619.2px;top:711.3px;width:7.4px;height:10px;background:#7ef224;"></div><div style="position:absolute;left:619.2px;top:724.05px;width:7.4px;height:10px;background:#7ef224;"></div><div style="position:absolute;left:619.2px;top:736.8px;width:7.4px;height:10px;background:#7ef224;"></div><div style="position:absolute;left:619.2px;top:749.55px;width:7.4px;height:10px;background:#7ef224;"></div><div style="position:absolute;left:619.2px;top:762.3px;width:7.4px;height:10px;background:#7ef224;"></div><div style="position:absolute;left:619.2px;top:775.05px;width:7.4px;height:10px;background:#7ef224;"></div><div style="position:absolute;left:619.2px;top:787.8px;width:7.4px;height:10px;background:#7ef224;"></div><div style="position:absolute;left:628.6px;top:545px;width:4.2px;height:65px;background:repeating-linear-gradient(#5a1414 0 1.7px,#3e171c 1.7px 3.1px);"></div><div style="position:absolute;left:634.8px;top:545px;width:4.2px;height:89px;background:repeating-linear-gradient(#5a1414 0 1.7px,#3e171c 1.7px 3.1px);"></div><svg style="position:absolute;left:572px;top:722.5px;overflow:visible" width="29" height="60" viewBox="0 0 29 60">
<path d="M-3 2 L32 2 L32 62 L-3 62Z" fill="rgba(0,0,0,.35)" filter="url(#blr)"/>
<path d="M0 0 Q14.5 3 29 0 L29 60 Q14.5 57 0 60 Z" fill="url(#fcg)"/>
<path d="M0 0 L1.5 0 L1.5 60 L0 60Z M28.5 0 L30 0 L30 60 L28.5 60Z" fill="rgba(0,0,0,.08)"/>
</svg><div style="position:absolute;left:387px;width:400px;top:785px;text-align:center;font-size:15.5px;line-height:1;color:#eeeeee;white-space:nowrap;letter-spacing:0px;text-indent:0px;transform:scaleX(0.9);transform-origin:50% 0;-webkit-text-stroke:0.12px #eeeeee;">CH 07</div><div style="position:absolute;left:689px;top:174px;width:42px;height:21px;background:#22c060;"></div><div style="position:absolute;left:703.6px;top:175px;font-size:22.5px;line-height:1;color:#f4f4f4;white-space:nowrap;letter-spacing:0px;-webkit-text-stroke:0.3px #f4f4f4;transform:scaleX(0.9);transform-origin:0 0;">G</div><div style="position:absolute;left:646px;top:197px;width:42px;height:21px;background:#22c060;"></div><div style="position:absolute;left:689px;top:197px;width:42px;height:21px;background:#22c060;"></div><div style="position:absolute;left:646px;top:197px;width:42px;height:21px;overflow:hidden;"><div style="position:absolute;left:5.5px;top:0.5px;font-size:22px;line-height:1;color:#f4f4f4;-webkit-text-stroke:0.3px #f4f4f4;transform:scaleX(0.95);transform-origin:0 0">EQ</div></div><div style="position:absolute;left:703px;top:198px;font-size:22px;line-height:1;color:#f4f4f4;white-space:nowrap;letter-spacing:0px;-webkit-text-stroke:0.3px #f4f4f4;transform:scaleX(0.88);transform-origin:0 0;">D</div><div style="position:absolute;left:646px;top:220.5px;width:86px;height:81.5px;background:#f4ec48;"></div><div style="position:absolute;left:489.5px;width:400px;top:250.5px;text-align:center;font-size:23px;line-height:1;color:#141414;white-space:nowrap;letter-spacing:0.35px;text-indent:0.35px;-webkit-text-stroke:0.3px #141414;">BD</div><svg style="position:absolute;left:644px;top:300px" width="92" height="65" viewBox="0 300 92 65"><line x1="2" y1="335.8" x2="89" y2="335.8" stroke="#6f6e76" stroke-width="2"/><path d="M1.6 335.4 C6 334 10 333 13.8 327.6 L17.9 320.3 C20 326 22 331 27.6 334.1 C33 337 38 340 43.9 345.5 C47 342.5 50 339.5 58.5 335 C64 331 68 329 72.4 326 C75 325 77 328 80.5 335 L89 356.9" fill="none" stroke="#22f022" stroke-width="3.3" stroke-linejoin="round" stroke-linecap="round"/></svg><div style="position:absolute;left:649.6px;top:363.8px;width:80.6px;height:43.7px;background:#1f2530;box-sizing:border-box;border:1.7px solid #2a9ab0;"></div><div style="position:absolute;left:689px;top:363.8px;width:2px;height:44px;background:#e8eef8;"></div><div style="position:absolute;left:645px;top:413px;width:89px;height:57.6px;background:#7a4c02;"></div><div style="position:absolute;left:490.5px;width:400px;top:431.5px;text-align:center;font-size:23px;line-height:1;color:#f6e8cc;white-space:nowrap;letter-spacing:0px;text-indent:0px;transform:scaleX(0.91);transform-origin:50% 0;-webkit-text-stroke:0.3px #f6e8cc;">SOLO</div><div style="position:absolute;left:646px;top:477.8px;width:87.8px;height:57.8px;background:#5c1414;"></div><div style="position:absolute;left:491.5px;width:400px;top:496.5px;text-align:center;font-size:23px;line-height:1;color:#f6e6e6;white-space:nowrap;letter-spacing:0px;text-indent:0px;transform:scaleX(0.96);transform-origin:50% 0;-webkit-text-stroke:0.3px #f6e6e6;">MUTE</div><div style="position:absolute;left:479.5px;width:400px;top:546px;text-align:center;font-size:15.5px;line-height:1;color:#f0f0f0;white-space:nowrap;letter-spacing:0.2px;text-indent:0.2px;-webkit-text-stroke:0.12px #f0f0f0;">-26.1</div><div style="position:absolute;left:662px;top:587.9px;width:40px;height:1.4px;background:#76767c;"></div><div style="position:absolute;left:648.4px;top:581.2px;font-size:12.3px;line-height:1;color:#8e8e92;white-space:nowrap;letter-spacing:0.1px;-webkit-text-stroke:0px #8e8e92;">10</div><div style="position:absolute;left:662px;top:608.4px;width:40px;height:1.4px;background:#76767c;"></div><div style="position:absolute;left:648.4px;top:601.7px;font-size:12.3px;line-height:1;color:#8e8e92;white-space:nowrap;letter-spacing:0.1px;-webkit-text-stroke:0px #8e8e92;">5</div><div style="position:absolute;left:662px;top:628.9px;width:40px;height:1.4px;background:#ededed;"></div><div style="position:absolute;left:648.4px;top:622.2px;font-size:12.3px;line-height:1;color:#8e8e92;white-space:nowrap;letter-spacing:0.1px;-webkit-text-stroke:0px #8e8e92;">0</div><div style="position:absolute;left:662px;top:649.4px;width:40px;height:1.4px;background:#76767c;"></div><div style="position:absolute;left:648.4px;top:642.7px;font-size:12.3px;line-height:1;color:#8e8e92;white-space:nowrap;letter-spacing:0.1px;-webkit-text-stroke:0px #8e8e92;">5</div><div style="position:absolute;left:662px;top:669.9px;width:40px;height:1.4px;background:#76767c;"></div><div style="position:absolute;left:648.4px;top:663.2px;font-size:12.3px;line-height:1;color:#8e8e92;white-space:nowrap;letter-spacing:0.1px;-webkit-text-stroke:0px #8e8e92;">10</div><div style="position:absolute;left:662px;top:690.4px;width:40px;height:1.4px;background:#76767c;"></div><div style="position:absolute;left:648.4px;top:683.7px;font-size:12.3px;line-height:1;color:#8e8e92;white-space:nowrap;letter-spacing:0.1px;-webkit-text-stroke:0px #8e8e92;">20</div><div style="position:absolute;left:662px;top:710.9px;width:40px;height:1.4px;background:#76767c;"></div><div style="position:absolute;left:648.4px;top:704.2px;font-size:12.3px;line-height:1;color:#8e8e92;white-space:nowrap;letter-spacing:0.1px;-webkit-text-stroke:0px #8e8e92;">30</div><div style="position:absolute;left:662px;top:731.4px;width:40px;height:1.4px;background:#76767c;"></div><div style="position:absolute;left:648.4px;top:724.7px;font-size:12.3px;line-height:1;color:#8e8e92;white-space:nowrap;letter-spacing:0.1px;-webkit-text-stroke:0px #8e8e92;">50</div><div style="position:absolute;left:677.1px;top:589px;width:5.6px;height:163px;background:#000;"></div><div style="position:absolute;left:711.2px;top:545.55px;width:7.4px;height:10px;background:#62140c;"></div><div style="position:absolute;left:711.2px;top:558.3px;width:7.4px;height:10px;background:#683c0e;"></div><div style="position:absolute;left:711.2px;top:571.05px;width:7.4px;height:10px;background:#683c0e;"></div><div style="position:absolute;left:711.2px;top:583.8px;width:7.4px;height:10px;background:#683c0e;"></div><div style="position:absolute;left:711.2px;top:596.55px;width:7.4px;height:10px;background:#683c0e;"></div><div style="position:absolute;left:711.2px;top:609.3px;width:7.4px;height:10px;background:#dc3a1c;"></div><div style="position:absolute;left:711.2px;top:622.05px;width:7.4px;height:10px;background:#683c0e;"></div><div style="position:absolute;left:711.2px;top:634.8px;width:7.4px;height:10px;background:#683c0e;"></div><div style="position:absolute;left:711.2px;top:647.55px;width:7.4px;height:10px;background:#683c0e;"></div><div style="position:absolute;left:711.2px;top:660.3px;width:7.4px;height:10px;background:#683c0e;"></div><div style="position:absolute;left:711.2px;top:673.05px;width:7.4px;height:10px;background:#683c0e;"></div><div style="position:absolute;left:711.2px;top:685.8px;width:7.4px;height:10px;background:#7ef224;"></div><div style="position:absolute;left:711.2px;top:698.55px;width:7.4px;height:10px;background:#7ef224;"></div><div style="position:absolute;left:711.2px;top:711.3px;width:7.4px;height:10px;background:#7ef224;"></div><div style="position:absolute;left:711.2px;top:724.05px;width:7.4px;height:10px;background:#7ef224;"></div><div style="position:absolute;left:711.2px;top:736.8px;width:7.4px;height:10px;background:#7ef224;"></div><div style="position:absolute;left:711.2px;top:749.55px;width:7.4px;height:10px;background:#7ef224;"></div><div style="position:absolute;left:711.2px;top:762.3px;width:7.4px;height:10px;background:#7ef224;"></div><div style="position:absolute;left:711.2px;top:775.05px;width:7.4px;height:10px;background:#7ef224;"></div><div style="position:absolute;left:711.2px;top:787.8px;width:7.4px;height:10px;background:#7ef224;"></div><div style="position:absolute;left:720.6px;top:545px;width:4.2px;height:65px;background:repeating-linear-gradient(#5a1414 0 1.7px,#3e171c 1.7px 3.1px);"></div><div style="position:absolute;left:726.8px;top:545px;width:4.2px;height:89px;background:repeating-linear-gradient(#5a1414 0 1.7px,#3e171c 1.7px 3.1px);"></div><svg style="position:absolute;left:664px;top:673.4px;overflow:visible" width="29" height="60" viewBox="0 0 29 60">
<path d="M-3 2 L32 2 L32 62 L-3 62Z" fill="rgba(0,0,0,.35)" filter="url(#blr)"/>
<path d="M0 0 Q14.5 3 29 0 L29 60 Q14.5 57 0 60 Z" fill="url(#fcg)"/>
<path d="M0 0 L1.5 0 L1.5 60 L0 60Z M28.5 0 L30 0 L30 60 L28.5 60Z" fill="rgba(0,0,0,.08)"/>
</svg><div style="position:absolute;left:479px;width:400px;top:785px;text-align:center;font-size:15.5px;line-height:1;color:#eeeeee;white-space:nowrap;letter-spacing:0px;text-indent:0px;transform:scaleX(0.9);transform-origin:50% 0;-webkit-text-stroke:0.12px #eeeeee;">CH 08</div><div style="position:absolute;left:923.8px;top:100.0px;width:132.4px;height:88.2px;background:#565a66;"></div><div style="position:absolute;left:791.2px;width:400px;top:133.2px;text-align:center;font-size:23px;line-height:1;color:#e8e8ec;white-space:nowrap;letter-spacing:0px;text-indent:0px;transform:scaleX(0.975);transform-origin:50% 0;-webkit-text-stroke:0.3px #e8e8ec;">Fine</div><div style="position:absolute;left:1063.8px;top:100.0px;width:133.7px;height:88.2px;background:#2a2a2a;box-sizing:border-box;border:2px solid #34d834;box-shadow:0 0 1px #0a3a0a;"></div><div style="position:absolute;left:932px;width:400px;top:133.0px;text-align:center;font-size:23px;line-height:1;color:#f4f4f4;white-space:nowrap;letter-spacing:0.25px;text-indent:0.25px;-webkit-text-stroke:0.3px #f4f4f4;">CH 1-8</div><div style="position:absolute;left:923.8px;top:194.4px;width:132.4px;height:88.2px;background:#5a1410;"></div><div style="position:absolute;left:923.8px;top:194.4px;width:132.4px;height:88.2px;overflow:hidden"><div style="position:absolute;left:4.6px;top:33.5px;font-size:23px;line-height:1;color:#f2e2de;white-space:nowrap;-webkit-text-stroke:0.35px #f2e2de;transform:scaleX(0.99);transform-origin:0 0">Mute Enable</div></div><div style="position:absolute;left:1063.8px;top:194.4px;width:133.7px;height:88.2px;background:#565a67;"></div><div style="position:absolute;left:932px;width:400px;top:227.4px;text-align:center;font-size:23px;line-height:1;color:#e8e8ec;white-space:nowrap;letter-spacing:0.25px;text-indent:0.25px;-webkit-text-stroke:0.3px #e8e8ec;">CH 9-16</div><div style="position:absolute;left:923.8px;top:288.8px;width:132.4px;height:88.2px;background:#565a66;"></div><div style="position:absolute;left:791.2px;width:400px;top:322.0px;text-align:center;font-size:23px;line-height:1;color:#e8e8ec;white-space:nowrap;letter-spacing:0px;text-indent:0px;transform:scaleX(0.975);transform-origin:50% 0;-webkit-text-stroke:0.3px #e8e8ec;">Snd-&gt;Fader</div><div style="position:absolute;left:1063.8px;top:288.8px;width:133.7px;height:88.2px;background:#565a67;"></div><div style="position:absolute;left:932px;width:400px;top:321.8px;text-align:center;font-size:23px;line-height:1;color:#e8e8ec;white-space:nowrap;letter-spacing:0.25px;text-indent:0.25px;-webkit-text-stroke:0.3px #e8e8ec;">CH 17-24</div><div style="position:absolute;left:923.8px;top:383.20000000000005px;width:132.4px;height:88.2px;background:#565a66;"></div><div style="position:absolute;left:938.5px;top:415.70000000000005px;font-size:23px;line-height:1;color:#e8e8ec;white-space:nowrap;letter-spacing:0.1px;-webkit-text-stroke:0.3px #e8e8ec;">Bus 01</div><svg style="position:absolute;left:1024px;top:403.20000000000005px" width="30" height="46" viewBox="0 0 30 46"><path d="M10 4.8 L20.5 4.8 L20.5 24 L28.5 24 L15.2 43 L1.8 24 L10 24Z" fill="#ededf0"/></svg><div style="position:absolute;left:1063.8px;top:383.20000000000005px;width:133.7px;height:88.2px;background:#565a67;"></div><div style="position:absolute;left:932px;width:400px;top:416.20000000000005px;text-align:center;font-size:23px;line-height:1;color:#e8e8ec;white-space:nowrap;letter-spacing:0.25px;text-indent:0.25px;-webkit-text-stroke:0.3px #e8e8ec;">CH 25-32</div><div style="position:absolute;left:1063.8px;top:477.6px;width:133.7px;height:88.2px;background:#565a67;"></div><div style="position:absolute;left:932px;width:400px;top:510.6px;text-align:center;font-size:23px;line-height:1;color:#e8e8ec;white-space:nowrap;letter-spacing:0.25px;text-indent:0.25px;-webkit-text-stroke:0.3px #e8e8ec;">AuxIn</div><div style="position:absolute;left:1063.8px;top:572.0px;width:133.7px;height:88.2px;background:#565a67;"></div><div style="position:absolute;left:932px;width:400px;top:605.0px;text-align:center;font-size:23px;line-height:1;color:#e8e8ec;white-space:nowrap;letter-spacing:0.25px;text-indent:0.25px;-webkit-text-stroke:0.3px #e8e8ec;">FX</div><div style="position:absolute;left:1063.8px;top:666.4000000000001px;width:133.7px;height:88.2px;background:#565a67;"></div><div style="position:absolute;left:932px;width:400px;top:699.4000000000001px;text-align:center;font-size:23px;line-height:1;color:#e8e8ec;white-space:nowrap;letter-spacing:0.25px;text-indent:0.25px;-webkit-text-stroke:0.3px #e8e8ec;">Bus 1-8</div><div style="position:absolute;left:1063.8px;top:760.8000000000001px;width:133.7px;height:88.2px;background:#565a67;"></div><div style="position:absolute;left:932px;width:400px;top:793.8000000000001px;text-align:center;font-size:23px;line-height:1;color:#e8e8ec;white-space:nowrap;letter-spacing:0.25px;text-indent:0.25px;-webkit-text-stroke:0.3px #e8e8ec;">Bus 9-16</div>
</div></body></html>
